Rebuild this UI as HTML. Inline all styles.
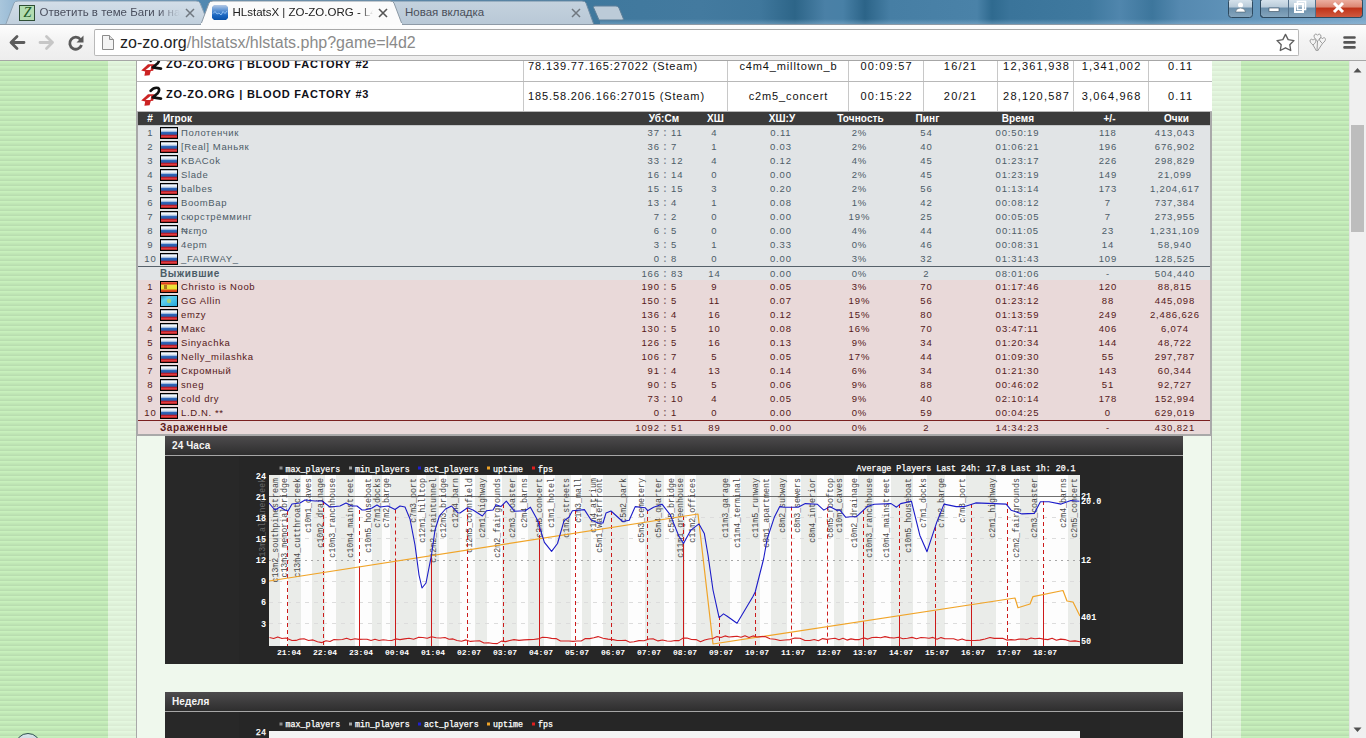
<!DOCTYPE html><html><head><meta charset="utf-8"><style>
*{margin:0;padding:0;box-sizing:border-box}
html,body{width:1366px;height:738px;overflow:hidden;background:#fff;font-family:"Liberation Sans",sans-serif}
.a{position:absolute}
.t{white-space:nowrap}
</style></head><body>
<div class="a" style="left:0px;top:60px;width:1349px;height:678px;background:repeating-linear-gradient(180deg,#b9ddb0 0,#b9ddb0 1px,#c8f1bc 1px,#c8f1bc 2px,#c5edba 2px,#c5edba 3px,#c1e8b6 3px,#c1e8b6 4px,#bde3b3 4px,#bde3b3 5px);"></div>
<div class="a" style="left:108px;top:60px;width:28px;height:678px;background:repeating-linear-gradient(180deg,#dbecd5 0,#dbecd5 1px,#e4f8df 1px,#e4f8df 2px,#e2f5dd 2px,#e2f5dd 3px,#dff2da 3px,#dff2da 4px,#ddefd7 4px,#ddefd7 5px);"></div>
<div class="a" style="left:1212px;top:60px;width:29px;height:678px;background:repeating-linear-gradient(180deg,#dbecd5 0,#dbecd5 1px,#e4f8df 1px,#e4f8df 2px,#e2f5dd 2px,#e2f5dd 3px,#dff2da 3px,#dff2da 4px,#ddefd7 4px,#ddefd7 5px);"></div>
<div class="a" style="left:136px;top:60px;width:1076px;height:678px;background:#eff8ed;border-left:1px solid #a8a8a8;border-right:1px solid #a8a8a8"></div>
<div class="a" style="left:137px;top:52px;width:1075px;height:30px;background:#fff;border-bottom:1px solid #b8b8b8"></div>
<div class="a" style="left:523px;top:52px;width:1px;height:29px;background:#c8c8c8;"></div>
<div class="a" style="left:727px;top:52px;width:1px;height:29px;background:#c8c8c8;"></div>
<div class="a" style="left:848px;top:52px;width:1px;height:29px;background:#c8c8c8;"></div>
<div class="a" style="left:923px;top:52px;width:1px;height:29px;background:#c8c8c8;"></div>
<div class="a" style="left:997px;top:52px;width:1px;height:29px;background:#c8c8c8;"></div>
<div class="a" style="left:1073px;top:52px;width:1px;height:29px;background:#c8c8c8;"></div>
<div class="a" style="left:1148px;top:52px;width:1px;height:29px;background:#c8c8c8;"></div>
<svg class="a" style="left:138px;top:54px" width="28" height="26" viewBox="0 0 28 26"><path d="M3.2 16.6 L10 10.2 L16.8 10.2 L15.2 16.8 L12.8 17 L11.6 21.2 L6.4 21.8 L7.2 17.6 Z" fill="#cc2424"/><path d="M7.6 15.9 L13.2 11.4 L12.6 15.9 Z" fill="#fff"/><path d="M12.6 6.8 Q16 3 20.2 4 Q22.4 6 19.4 9.6 L14.8 13.4 L23 14.6" stroke="#111" stroke-width="2.6" fill="none" stroke-linecap="round" stroke-linejoin="round"/></svg>
<div class="a t" style="top:59.39px;font-size:11px;line-height:11px;font-weight:bold;color:#101018;font-family:'Liberation Sans',sans-serif;letter-spacing:0.78px;left:166.00px;">ZO-ZO.ORG | BLOOD FACTORY #2</div>
<div class="a t" style="top:61.39px;font-size:11px;line-height:11px;font-weight:normal;color:#111;font-family:'Liberation Sans',sans-serif;letter-spacing:0.88px;left:528.00px;">78.139.77.165:27022 (Steam)</div>
<div class="a t" style="top:61.39px;font-size:11px;line-height:11px;font-weight:normal;color:#111;font-family:'Liberation Sans',sans-serif;letter-spacing:0.87px;left:588.43px;width:400px;text-align:center;">c4m4_milltown_b</div>
<div class="a t" style="top:61.39px;font-size:11px;line-height:11px;font-weight:normal;color:#111;font-family:'Liberation Sans',sans-serif;letter-spacing:1.2px;left:686.60px;width:400px;text-align:center;">00:09:57</div>
<div class="a t" style="top:61.39px;font-size:11px;line-height:11px;font-weight:normal;color:#111;font-family:'Liberation Sans',sans-serif;letter-spacing:1.2px;left:760.60px;width:400px;text-align:center;">16/21</div>
<div class="a t" style="top:61.39px;font-size:11px;line-height:11px;font-weight:normal;color:#111;font-family:'Liberation Sans',sans-serif;letter-spacing:1.2px;left:836.60px;width:400px;text-align:center;">12,361,938</div>
<div class="a t" style="top:61.39px;font-size:11px;line-height:11px;font-weight:normal;color:#111;font-family:'Liberation Sans',sans-serif;letter-spacing:1.2px;left:911.60px;width:400px;text-align:center;">1,341,002</div>
<div class="a t" style="top:61.39px;font-size:11px;line-height:11px;font-weight:normal;color:#111;font-family:'Liberation Sans',sans-serif;letter-spacing:1.2px;left:980.60px;width:400px;text-align:center;">0.11</div>
<div class="a" style="left:137px;top:82px;width:1075px;height:30px;background:#fff;border-bottom:1px solid #b8b8b8"></div>
<div class="a" style="left:523px;top:82px;width:1px;height:29px;background:#c8c8c8;"></div>
<div class="a" style="left:727px;top:82px;width:1px;height:29px;background:#c8c8c8;"></div>
<div class="a" style="left:848px;top:82px;width:1px;height:29px;background:#c8c8c8;"></div>
<div class="a" style="left:923px;top:82px;width:1px;height:29px;background:#c8c8c8;"></div>
<div class="a" style="left:997px;top:82px;width:1px;height:29px;background:#c8c8c8;"></div>
<div class="a" style="left:1073px;top:82px;width:1px;height:29px;background:#c8c8c8;"></div>
<div class="a" style="left:1148px;top:82px;width:1px;height:29px;background:#c8c8c8;"></div>
<svg class="a" style="left:138px;top:84px" width="28" height="26" viewBox="0 0 28 26"><path d="M3.2 16.6 L10 10.2 L16.8 10.2 L15.2 16.8 L12.8 17 L11.6 21.2 L6.4 21.8 L7.2 17.6 Z" fill="#cc2424"/><path d="M7.6 15.9 L13.2 11.4 L12.6 15.9 Z" fill="#fff"/><path d="M12.6 6.8 Q16 3 20.2 4 Q22.4 6 19.4 9.6 L14.8 13.4 L23 14.6" stroke="#111" stroke-width="2.6" fill="none" stroke-linecap="round" stroke-linejoin="round"/></svg>
<div class="a t" style="top:89.39px;font-size:11px;line-height:11px;font-weight:bold;color:#101018;font-family:'Liberation Sans',sans-serif;letter-spacing:0.78px;left:166.00px;">ZO-ZO.ORG | BLOOD FACTORY #3</div>
<div class="a t" style="top:91.39px;font-size:11px;line-height:11px;font-weight:normal;color:#111;font-family:'Liberation Sans',sans-serif;letter-spacing:0.88px;left:528.00px;">185.58.206.166:27015 (Steam)</div>
<div class="a t" style="top:91.39px;font-size:11px;line-height:11px;font-weight:normal;color:#111;font-family:'Liberation Sans',sans-serif;letter-spacing:0.87px;left:588.43px;width:400px;text-align:center;">c2m5_concert</div>
<div class="a t" style="top:91.39px;font-size:11px;line-height:11px;font-weight:normal;color:#111;font-family:'Liberation Sans',sans-serif;letter-spacing:1.2px;left:686.60px;width:400px;text-align:center;">00:15:22</div>
<div class="a t" style="top:91.39px;font-size:11px;line-height:11px;font-weight:normal;color:#111;font-family:'Liberation Sans',sans-serif;letter-spacing:1.2px;left:760.60px;width:400px;text-align:center;">20/21</div>
<div class="a t" style="top:91.39px;font-size:11px;line-height:11px;font-weight:normal;color:#111;font-family:'Liberation Sans',sans-serif;letter-spacing:1.2px;left:836.60px;width:400px;text-align:center;">28,120,587</div>
<div class="a t" style="top:91.39px;font-size:11px;line-height:11px;font-weight:normal;color:#111;font-family:'Liberation Sans',sans-serif;letter-spacing:1.2px;left:911.60px;width:400px;text-align:center;">3,064,968</div>
<div class="a t" style="top:91.39px;font-size:11px;line-height:11px;font-weight:normal;color:#111;font-family:'Liberation Sans',sans-serif;letter-spacing:1.2px;left:980.60px;width:400px;text-align:center;">0.11</div>
<div class="a" style="left:136px;top:112px;width:1076px;height:324px;background:#a9a9a9;"></div>
<div class="a" style="left:138px;top:112px;width:1072px;height:13px;background:#3b3b3b;"></div>
<div class="a" style="left:138px;top:125px;width:1072px;height:1px;background:#c4c7c9;"></div>
<div class="a t" style="top:113.53px;font-size:10px;line-height:10px;font-weight:bold;color:#fff;font-family:'Liberation Sans',sans-serif;left:-50.00px;width:400px;text-align:center;">#</div>
<div class="a t" style="top:113.53px;font-size:10px;line-height:10px;font-weight:bold;color:#fff;font-family:'Liberation Sans',sans-serif;letter-spacing:0.1px;left:163.00px;">Игрок</div>
<div class="a t" style="top:113.53px;font-size:10px;line-height:10px;font-weight:bold;color:#fff;font-family:'Liberation Sans',sans-serif;letter-spacing:0.1px;left:464.05px;width:400px;text-align:center;">Уб:См</div>
<div class="a t" style="top:113.53px;font-size:10px;line-height:10px;font-weight:bold;color:#fff;font-family:'Liberation Sans',sans-serif;letter-spacing:0.1px;left:515.55px;width:400px;text-align:center;">ХШ</div>
<div class="a t" style="top:113.53px;font-size:10px;line-height:10px;font-weight:bold;color:#fff;font-family:'Liberation Sans',sans-serif;letter-spacing:0.1px;left:582.05px;width:400px;text-align:center;">ХШ:У</div>
<div class="a t" style="top:113.53px;font-size:10px;line-height:10px;font-weight:bold;color:#fff;font-family:'Liberation Sans',sans-serif;letter-spacing:0.1px;left:660.55px;width:400px;text-align:center;">Точность</div>
<div class="a t" style="top:113.53px;font-size:10px;line-height:10px;font-weight:bold;color:#fff;font-family:'Liberation Sans',sans-serif;letter-spacing:0.1px;left:727.55px;width:400px;text-align:center;">Пинг</div>
<div class="a t" style="top:113.53px;font-size:10px;line-height:10px;font-weight:bold;color:#fff;font-family:'Liberation Sans',sans-serif;letter-spacing:0.1px;left:818.05px;width:400px;text-align:center;">Время</div>
<div class="a t" style="top:113.53px;font-size:10px;line-height:10px;font-weight:bold;color:#fff;font-family:'Liberation Sans',sans-serif;letter-spacing:0.1px;left:909.55px;width:400px;text-align:center;">+/-</div>
<div class="a t" style="top:113.53px;font-size:10px;line-height:10px;font-weight:bold;color:#fff;font-family:'Liberation Sans',sans-serif;letter-spacing:0.1px;left:976.55px;width:400px;text-align:center;">Очки</div>
<svg width="0" height="0" style="position:absolute"><defs><linearGradient id="gru" x1="0" y1="0" x2="0" y2="1"><stop offset="0" stop-color="#8a96a4"/><stop offset=".15" stop-color="#f4f6fa"/><stop offset=".32" stop-color="#c8d8ec"/><stop offset=".45" stop-color="#2f66b8"/><stop offset=".62" stop-color="#2a5aa8"/><stop offset=".74" stop-color="#b81a2a"/><stop offset=".88" stop-color="#e84848"/><stop offset="1" stop-color="#9a1010"/></linearGradient><linearGradient id="ges" x1="0" y1="0" x2="0" y2="1"><stop offset="0" stop-color="#f07050"/><stop offset=".2" stop-color="#d83010"/><stop offset=".3" stop-color="#f0e040"/><stop offset=".7" stop-color="#e8e030"/><stop offset=".8" stop-color="#e05020"/><stop offset="1" stop-color="#c83010"/></linearGradient><linearGradient id="gkz" x1="0" y1="0" x2="1" y2="1"><stop offset="0" stop-color="#3090b0"/><stop offset=".3" stop-color="#60d0f0"/><stop offset="1" stop-color="#28a8d8"/></linearGradient></defs></svg>
<div class="a" style="left:138px;top:126px;width:1072px;height:14px;background:#e1e4e6;"></div>
<div class="a t" style="top:127.96px;font-size:9.5px;line-height:9.5px;font-weight:normal;color:#4d5c66;font-family:'Liberation Sans',sans-serif;letter-spacing:0.85px;left:-49.57px;width:400px;text-align:center;">1</div>
<svg class="a" style="left:160px;top:127px" width="18" height="12"><rect x="0" y="0" width="18" height="12" fill="#000"/><rect x="1" y="1" width="16" height="10" fill="url(#gru)"/></svg>
<div class="a t" style="top:127.96px;font-size:9.5px;line-height:9.5px;font-weight:normal;color:#4d5c66;font-family:'Liberation Sans',sans-serif;letter-spacing:0.62px;left:181.00px;">Полотенчик</div>
<div class="a t" style="top:127.96px;font-size:9.5px;line-height:9.5px;font-weight:normal;color:#4d5c66;font-family:'Liberation Sans',sans-serif;letter-spacing:0.85px;left:259.85px;width:400px;text-align:right;">37</div>
<div class="a t" style="top:127.53px;font-size:10px;line-height:10px;font-weight:bold;color:#7d8a92;font-family:'Liberation Sans',sans-serif;left:465.00px;width:400px;text-align:center;">:</div>
<div class="a t" style="top:127.96px;font-size:9.5px;line-height:9.5px;font-weight:normal;color:#4d5c66;font-family:'Liberation Sans',sans-serif;letter-spacing:0.85px;left:671.00px;">11</div>
<div class="a t" style="top:127.96px;font-size:9.5px;line-height:9.5px;font-weight:normal;color:#4d5c66;font-family:'Liberation Sans',sans-serif;letter-spacing:0.85px;left:514.42px;width:400px;text-align:center;">4</div>
<div class="a t" style="top:127.96px;font-size:9.5px;line-height:9.5px;font-weight:normal;color:#4d5c66;font-family:'Liberation Sans',sans-serif;letter-spacing:0.85px;left:580.92px;width:400px;text-align:center;">0.11</div>
<div class="a t" style="top:127.96px;font-size:9.5px;line-height:9.5px;font-weight:normal;color:#4d5c66;font-family:'Liberation Sans',sans-serif;letter-spacing:0.85px;left:659.42px;width:400px;text-align:center;">2%</div>
<div class="a t" style="top:127.96px;font-size:9.5px;line-height:9.5px;font-weight:normal;color:#4d5c66;font-family:'Liberation Sans',sans-serif;letter-spacing:0.85px;left:726.42px;width:400px;text-align:center;">54</div>
<div class="a t" style="top:127.96px;font-size:9.5px;line-height:9.5px;font-weight:normal;color:#4d5c66;font-family:'Liberation Sans',sans-serif;letter-spacing:0.85px;left:817.42px;width:400px;text-align:center;">00:50:19</div>
<div class="a t" style="top:127.96px;font-size:9.5px;line-height:9.5px;font-weight:normal;color:#4d5c66;font-family:'Liberation Sans',sans-serif;letter-spacing:0.85px;left:907.92px;width:400px;text-align:center;">118</div>
<div class="a t" style="top:127.96px;font-size:9.5px;line-height:9.5px;font-weight:normal;color:#4d5c66;font-family:'Liberation Sans',sans-serif;letter-spacing:0.85px;left:974.92px;width:400px;text-align:center;">413,043</div>
<div class="a" style="left:138px;top:140px;width:1072px;height:14px;background:#e1e4e6;"></div>
<div class="a t" style="top:141.96px;font-size:9.5px;line-height:9.5px;font-weight:normal;color:#4d5c66;font-family:'Liberation Sans',sans-serif;letter-spacing:0.85px;left:-49.57px;width:400px;text-align:center;">2</div>
<svg class="a" style="left:160px;top:141px" width="18" height="12"><rect x="0" y="0" width="18" height="12" fill="#000"/><rect x="1" y="1" width="16" height="10" fill="url(#gru)"/></svg>
<div class="a t" style="top:141.96px;font-size:9.5px;line-height:9.5px;font-weight:normal;color:#4d5c66;font-family:'Liberation Sans',sans-serif;letter-spacing:0.62px;left:181.00px;">[Real] Маньяк</div>
<div class="a t" style="top:141.96px;font-size:9.5px;line-height:9.5px;font-weight:normal;color:#4d5c66;font-family:'Liberation Sans',sans-serif;letter-spacing:0.85px;left:259.85px;width:400px;text-align:right;">36</div>
<div class="a t" style="top:141.53px;font-size:10px;line-height:10px;font-weight:bold;color:#7d8a92;font-family:'Liberation Sans',sans-serif;left:465.00px;width:400px;text-align:center;">:</div>
<div class="a t" style="top:141.96px;font-size:9.5px;line-height:9.5px;font-weight:normal;color:#4d5c66;font-family:'Liberation Sans',sans-serif;letter-spacing:0.85px;left:671.00px;">7</div>
<div class="a t" style="top:141.96px;font-size:9.5px;line-height:9.5px;font-weight:normal;color:#4d5c66;font-family:'Liberation Sans',sans-serif;letter-spacing:0.85px;left:514.42px;width:400px;text-align:center;">1</div>
<div class="a t" style="top:141.96px;font-size:9.5px;line-height:9.5px;font-weight:normal;color:#4d5c66;font-family:'Liberation Sans',sans-serif;letter-spacing:0.85px;left:580.92px;width:400px;text-align:center;">0.03</div>
<div class="a t" style="top:141.96px;font-size:9.5px;line-height:9.5px;font-weight:normal;color:#4d5c66;font-family:'Liberation Sans',sans-serif;letter-spacing:0.85px;left:659.42px;width:400px;text-align:center;">2%</div>
<div class="a t" style="top:141.96px;font-size:9.5px;line-height:9.5px;font-weight:normal;color:#4d5c66;font-family:'Liberation Sans',sans-serif;letter-spacing:0.85px;left:726.42px;width:400px;text-align:center;">40</div>
<div class="a t" style="top:141.96px;font-size:9.5px;line-height:9.5px;font-weight:normal;color:#4d5c66;font-family:'Liberation Sans',sans-serif;letter-spacing:0.85px;left:817.42px;width:400px;text-align:center;">01:06:21</div>
<div class="a t" style="top:141.96px;font-size:9.5px;line-height:9.5px;font-weight:normal;color:#4d5c66;font-family:'Liberation Sans',sans-serif;letter-spacing:0.85px;left:907.92px;width:400px;text-align:center;">196</div>
<div class="a t" style="top:141.96px;font-size:9.5px;line-height:9.5px;font-weight:normal;color:#4d5c66;font-family:'Liberation Sans',sans-serif;letter-spacing:0.85px;left:974.92px;width:400px;text-align:center;">676,902</div>
<div class="a" style="left:138px;top:154px;width:1072px;height:14px;background:#e1e4e6;"></div>
<div class="a t" style="top:155.96px;font-size:9.5px;line-height:9.5px;font-weight:normal;color:#4d5c66;font-family:'Liberation Sans',sans-serif;letter-spacing:0.85px;left:-49.57px;width:400px;text-align:center;">3</div>
<svg class="a" style="left:160px;top:155px" width="18" height="12"><rect x="0" y="0" width="18" height="12" fill="#000"/><rect x="1" y="1" width="16" height="10" fill="url(#gru)"/></svg>
<div class="a t" style="top:155.96px;font-size:9.5px;line-height:9.5px;font-weight:normal;color:#4d5c66;font-family:'Liberation Sans',sans-serif;letter-spacing:0.62px;left:181.00px;">KBACok</div>
<div class="a t" style="top:155.96px;font-size:9.5px;line-height:9.5px;font-weight:normal;color:#4d5c66;font-family:'Liberation Sans',sans-serif;letter-spacing:0.85px;left:259.85px;width:400px;text-align:right;">33</div>
<div class="a t" style="top:155.53px;font-size:10px;line-height:10px;font-weight:bold;color:#7d8a92;font-family:'Liberation Sans',sans-serif;left:465.00px;width:400px;text-align:center;">:</div>
<div class="a t" style="top:155.96px;font-size:9.5px;line-height:9.5px;font-weight:normal;color:#4d5c66;font-family:'Liberation Sans',sans-serif;letter-spacing:0.85px;left:671.00px;">12</div>
<div class="a t" style="top:155.96px;font-size:9.5px;line-height:9.5px;font-weight:normal;color:#4d5c66;font-family:'Liberation Sans',sans-serif;letter-spacing:0.85px;left:514.42px;width:400px;text-align:center;">4</div>
<div class="a t" style="top:155.96px;font-size:9.5px;line-height:9.5px;font-weight:normal;color:#4d5c66;font-family:'Liberation Sans',sans-serif;letter-spacing:0.85px;left:580.92px;width:400px;text-align:center;">0.12</div>
<div class="a t" style="top:155.96px;font-size:9.5px;line-height:9.5px;font-weight:normal;color:#4d5c66;font-family:'Liberation Sans',sans-serif;letter-spacing:0.85px;left:659.42px;width:400px;text-align:center;">4%</div>
<div class="a t" style="top:155.96px;font-size:9.5px;line-height:9.5px;font-weight:normal;color:#4d5c66;font-family:'Liberation Sans',sans-serif;letter-spacing:0.85px;left:726.42px;width:400px;text-align:center;">45</div>
<div class="a t" style="top:155.96px;font-size:9.5px;line-height:9.5px;font-weight:normal;color:#4d5c66;font-family:'Liberation Sans',sans-serif;letter-spacing:0.85px;left:817.42px;width:400px;text-align:center;">01:23:17</div>
<div class="a t" style="top:155.96px;font-size:9.5px;line-height:9.5px;font-weight:normal;color:#4d5c66;font-family:'Liberation Sans',sans-serif;letter-spacing:0.85px;left:907.92px;width:400px;text-align:center;">226</div>
<div class="a t" style="top:155.96px;font-size:9.5px;line-height:9.5px;font-weight:normal;color:#4d5c66;font-family:'Liberation Sans',sans-serif;letter-spacing:0.85px;left:974.92px;width:400px;text-align:center;">298,829</div>
<div class="a" style="left:138px;top:168px;width:1072px;height:14px;background:#e1e4e6;"></div>
<div class="a t" style="top:169.96px;font-size:9.5px;line-height:9.5px;font-weight:normal;color:#4d5c66;font-family:'Liberation Sans',sans-serif;letter-spacing:0.85px;left:-49.57px;width:400px;text-align:center;">4</div>
<svg class="a" style="left:160px;top:169px" width="18" height="12"><rect x="0" y="0" width="18" height="12" fill="#000"/><rect x="1" y="1" width="16" height="10" fill="url(#gru)"/></svg>
<div class="a t" style="top:169.96px;font-size:9.5px;line-height:9.5px;font-weight:normal;color:#4d5c66;font-family:'Liberation Sans',sans-serif;letter-spacing:0.62px;left:181.00px;">Slade</div>
<div class="a t" style="top:169.96px;font-size:9.5px;line-height:9.5px;font-weight:normal;color:#4d5c66;font-family:'Liberation Sans',sans-serif;letter-spacing:0.85px;left:259.85px;width:400px;text-align:right;">16</div>
<div class="a t" style="top:169.53px;font-size:10px;line-height:10px;font-weight:bold;color:#7d8a92;font-family:'Liberation Sans',sans-serif;left:465.00px;width:400px;text-align:center;">:</div>
<div class="a t" style="top:169.96px;font-size:9.5px;line-height:9.5px;font-weight:normal;color:#4d5c66;font-family:'Liberation Sans',sans-serif;letter-spacing:0.85px;left:671.00px;">14</div>
<div class="a t" style="top:169.96px;font-size:9.5px;line-height:9.5px;font-weight:normal;color:#4d5c66;font-family:'Liberation Sans',sans-serif;letter-spacing:0.85px;left:514.42px;width:400px;text-align:center;">0</div>
<div class="a t" style="top:169.96px;font-size:9.5px;line-height:9.5px;font-weight:normal;color:#4d5c66;font-family:'Liberation Sans',sans-serif;letter-spacing:0.85px;left:580.92px;width:400px;text-align:center;">0.00</div>
<div class="a t" style="top:169.96px;font-size:9.5px;line-height:9.5px;font-weight:normal;color:#4d5c66;font-family:'Liberation Sans',sans-serif;letter-spacing:0.85px;left:659.42px;width:400px;text-align:center;">2%</div>
<div class="a t" style="top:169.96px;font-size:9.5px;line-height:9.5px;font-weight:normal;color:#4d5c66;font-family:'Liberation Sans',sans-serif;letter-spacing:0.85px;left:726.42px;width:400px;text-align:center;">45</div>
<div class="a t" style="top:169.96px;font-size:9.5px;line-height:9.5px;font-weight:normal;color:#4d5c66;font-family:'Liberation Sans',sans-serif;letter-spacing:0.85px;left:817.42px;width:400px;text-align:center;">01:23:19</div>
<div class="a t" style="top:169.96px;font-size:9.5px;line-height:9.5px;font-weight:normal;color:#4d5c66;font-family:'Liberation Sans',sans-serif;letter-spacing:0.85px;left:907.92px;width:400px;text-align:center;">149</div>
<div class="a t" style="top:169.96px;font-size:9.5px;line-height:9.5px;font-weight:normal;color:#4d5c66;font-family:'Liberation Sans',sans-serif;letter-spacing:0.85px;left:974.92px;width:400px;text-align:center;">21,099</div>
<div class="a" style="left:138px;top:182px;width:1072px;height:14px;background:#e1e4e6;"></div>
<div class="a t" style="top:183.96px;font-size:9.5px;line-height:9.5px;font-weight:normal;color:#4d5c66;font-family:'Liberation Sans',sans-serif;letter-spacing:0.85px;left:-49.57px;width:400px;text-align:center;">5</div>
<svg class="a" style="left:160px;top:183px" width="18" height="12"><rect x="0" y="0" width="18" height="12" fill="#000"/><rect x="1" y="1" width="16" height="10" fill="url(#gru)"/></svg>
<div class="a t" style="top:183.96px;font-size:9.5px;line-height:9.5px;font-weight:normal;color:#4d5c66;font-family:'Liberation Sans',sans-serif;letter-spacing:0.62px;left:181.00px;">balbes</div>
<div class="a t" style="top:183.96px;font-size:9.5px;line-height:9.5px;font-weight:normal;color:#4d5c66;font-family:'Liberation Sans',sans-serif;letter-spacing:0.85px;left:259.85px;width:400px;text-align:right;">15</div>
<div class="a t" style="top:183.53px;font-size:10px;line-height:10px;font-weight:bold;color:#7d8a92;font-family:'Liberation Sans',sans-serif;left:465.00px;width:400px;text-align:center;">:</div>
<div class="a t" style="top:183.96px;font-size:9.5px;line-height:9.5px;font-weight:normal;color:#4d5c66;font-family:'Liberation Sans',sans-serif;letter-spacing:0.85px;left:671.00px;">15</div>
<div class="a t" style="top:183.96px;font-size:9.5px;line-height:9.5px;font-weight:normal;color:#4d5c66;font-family:'Liberation Sans',sans-serif;letter-spacing:0.85px;left:514.42px;width:400px;text-align:center;">3</div>
<div class="a t" style="top:183.96px;font-size:9.5px;line-height:9.5px;font-weight:normal;color:#4d5c66;font-family:'Liberation Sans',sans-serif;letter-spacing:0.85px;left:580.92px;width:400px;text-align:center;">0.20</div>
<div class="a t" style="top:183.96px;font-size:9.5px;line-height:9.5px;font-weight:normal;color:#4d5c66;font-family:'Liberation Sans',sans-serif;letter-spacing:0.85px;left:659.42px;width:400px;text-align:center;">2%</div>
<div class="a t" style="top:183.96px;font-size:9.5px;line-height:9.5px;font-weight:normal;color:#4d5c66;font-family:'Liberation Sans',sans-serif;letter-spacing:0.85px;left:726.42px;width:400px;text-align:center;">56</div>
<div class="a t" style="top:183.96px;font-size:9.5px;line-height:9.5px;font-weight:normal;color:#4d5c66;font-family:'Liberation Sans',sans-serif;letter-spacing:0.85px;left:817.42px;width:400px;text-align:center;">01:13:14</div>
<div class="a t" style="top:183.96px;font-size:9.5px;line-height:9.5px;font-weight:normal;color:#4d5c66;font-family:'Liberation Sans',sans-serif;letter-spacing:0.85px;left:907.92px;width:400px;text-align:center;">173</div>
<div class="a t" style="top:183.96px;font-size:9.5px;line-height:9.5px;font-weight:normal;color:#4d5c66;font-family:'Liberation Sans',sans-serif;letter-spacing:0.85px;left:974.92px;width:400px;text-align:center;">1,204,617</div>
<div class="a" style="left:138px;top:196px;width:1072px;height:14px;background:#e1e4e6;"></div>
<div class="a t" style="top:197.96px;font-size:9.5px;line-height:9.5px;font-weight:normal;color:#4d5c66;font-family:'Liberation Sans',sans-serif;letter-spacing:0.85px;left:-49.57px;width:400px;text-align:center;">6</div>
<svg class="a" style="left:160px;top:197px" width="18" height="12"><rect x="0" y="0" width="18" height="12" fill="#000"/><rect x="1" y="1" width="16" height="10" fill="url(#gru)"/></svg>
<div class="a t" style="top:197.96px;font-size:9.5px;line-height:9.5px;font-weight:normal;color:#4d5c66;font-family:'Liberation Sans',sans-serif;letter-spacing:0.62px;left:181.00px;">BoomBap</div>
<div class="a t" style="top:197.96px;font-size:9.5px;line-height:9.5px;font-weight:normal;color:#4d5c66;font-family:'Liberation Sans',sans-serif;letter-spacing:0.85px;left:259.85px;width:400px;text-align:right;">13</div>
<div class="a t" style="top:197.53px;font-size:10px;line-height:10px;font-weight:bold;color:#7d8a92;font-family:'Liberation Sans',sans-serif;left:465.00px;width:400px;text-align:center;">:</div>
<div class="a t" style="top:197.96px;font-size:9.5px;line-height:9.5px;font-weight:normal;color:#4d5c66;font-family:'Liberation Sans',sans-serif;letter-spacing:0.85px;left:671.00px;">4</div>
<div class="a t" style="top:197.96px;font-size:9.5px;line-height:9.5px;font-weight:normal;color:#4d5c66;font-family:'Liberation Sans',sans-serif;letter-spacing:0.85px;left:514.42px;width:400px;text-align:center;">1</div>
<div class="a t" style="top:197.96px;font-size:9.5px;line-height:9.5px;font-weight:normal;color:#4d5c66;font-family:'Liberation Sans',sans-serif;letter-spacing:0.85px;left:580.92px;width:400px;text-align:center;">0.08</div>
<div class="a t" style="top:197.96px;font-size:9.5px;line-height:9.5px;font-weight:normal;color:#4d5c66;font-family:'Liberation Sans',sans-serif;letter-spacing:0.85px;left:659.42px;width:400px;text-align:center;">1%</div>
<div class="a t" style="top:197.96px;font-size:9.5px;line-height:9.5px;font-weight:normal;color:#4d5c66;font-family:'Liberation Sans',sans-serif;letter-spacing:0.85px;left:726.42px;width:400px;text-align:center;">42</div>
<div class="a t" style="top:197.96px;font-size:9.5px;line-height:9.5px;font-weight:normal;color:#4d5c66;font-family:'Liberation Sans',sans-serif;letter-spacing:0.85px;left:817.42px;width:400px;text-align:center;">00:08:12</div>
<div class="a t" style="top:197.96px;font-size:9.5px;line-height:9.5px;font-weight:normal;color:#4d5c66;font-family:'Liberation Sans',sans-serif;letter-spacing:0.85px;left:907.92px;width:400px;text-align:center;">7</div>
<div class="a t" style="top:197.96px;font-size:9.5px;line-height:9.5px;font-weight:normal;color:#4d5c66;font-family:'Liberation Sans',sans-serif;letter-spacing:0.85px;left:974.92px;width:400px;text-align:center;">737,384</div>
<div class="a" style="left:138px;top:210px;width:1072px;height:14px;background:#e1e4e6;"></div>
<div class="a t" style="top:211.96px;font-size:9.5px;line-height:9.5px;font-weight:normal;color:#4d5c66;font-family:'Liberation Sans',sans-serif;letter-spacing:0.85px;left:-49.57px;width:400px;text-align:center;">7</div>
<svg class="a" style="left:160px;top:211px" width="18" height="12"><rect x="0" y="0" width="18" height="12" fill="#000"/><rect x="1" y="1" width="16" height="10" fill="url(#gru)"/></svg>
<div class="a t" style="top:211.96px;font-size:9.5px;line-height:9.5px;font-weight:normal;color:#4d5c66;font-family:'Liberation Sans',sans-serif;letter-spacing:0.62px;left:181.00px;">сюрстрёмминг</div>
<div class="a t" style="top:211.96px;font-size:9.5px;line-height:9.5px;font-weight:normal;color:#4d5c66;font-family:'Liberation Sans',sans-serif;letter-spacing:0.85px;left:259.85px;width:400px;text-align:right;">7</div>
<div class="a t" style="top:211.53px;font-size:10px;line-height:10px;font-weight:bold;color:#7d8a92;font-family:'Liberation Sans',sans-serif;left:465.00px;width:400px;text-align:center;">:</div>
<div class="a t" style="top:211.96px;font-size:9.5px;line-height:9.5px;font-weight:normal;color:#4d5c66;font-family:'Liberation Sans',sans-serif;letter-spacing:0.85px;left:671.00px;">2</div>
<div class="a t" style="top:211.96px;font-size:9.5px;line-height:9.5px;font-weight:normal;color:#4d5c66;font-family:'Liberation Sans',sans-serif;letter-spacing:0.85px;left:514.42px;width:400px;text-align:center;">0</div>
<div class="a t" style="top:211.96px;font-size:9.5px;line-height:9.5px;font-weight:normal;color:#4d5c66;font-family:'Liberation Sans',sans-serif;letter-spacing:0.85px;left:580.92px;width:400px;text-align:center;">0.00</div>
<div class="a t" style="top:211.96px;font-size:9.5px;line-height:9.5px;font-weight:normal;color:#4d5c66;font-family:'Liberation Sans',sans-serif;letter-spacing:0.85px;left:659.42px;width:400px;text-align:center;">19%</div>
<div class="a t" style="top:211.96px;font-size:9.5px;line-height:9.5px;font-weight:normal;color:#4d5c66;font-family:'Liberation Sans',sans-serif;letter-spacing:0.85px;left:726.42px;width:400px;text-align:center;">25</div>
<div class="a t" style="top:211.96px;font-size:9.5px;line-height:9.5px;font-weight:normal;color:#4d5c66;font-family:'Liberation Sans',sans-serif;letter-spacing:0.85px;left:817.42px;width:400px;text-align:center;">00:05:05</div>
<div class="a t" style="top:211.96px;font-size:9.5px;line-height:9.5px;font-weight:normal;color:#4d5c66;font-family:'Liberation Sans',sans-serif;letter-spacing:0.85px;left:907.92px;width:400px;text-align:center;">7</div>
<div class="a t" style="top:211.96px;font-size:9.5px;line-height:9.5px;font-weight:normal;color:#4d5c66;font-family:'Liberation Sans',sans-serif;letter-spacing:0.85px;left:974.92px;width:400px;text-align:center;">273,955</div>
<div class="a" style="left:138px;top:224px;width:1072px;height:14px;background:#e1e4e6;"></div>
<div class="a t" style="top:225.96px;font-size:9.5px;line-height:9.5px;font-weight:normal;color:#4d5c66;font-family:'Liberation Sans',sans-serif;letter-spacing:0.85px;left:-49.57px;width:400px;text-align:center;">8</div>
<svg class="a" style="left:160px;top:225px" width="18" height="12"><rect x="0" y="0" width="18" height="12" fill="#000"/><rect x="1" y="1" width="16" height="10" fill="url(#gru)"/></svg>
<div class="a t" style="top:225.96px;font-size:9.5px;line-height:9.5px;font-weight:normal;color:#4d5c66;font-family:'Liberation Sans',sans-serif;letter-spacing:0.62px;left:181.00px;">₦εɱo</div>
<div class="a t" style="top:225.96px;font-size:9.5px;line-height:9.5px;font-weight:normal;color:#4d5c66;font-family:'Liberation Sans',sans-serif;letter-spacing:0.85px;left:259.85px;width:400px;text-align:right;">6</div>
<div class="a t" style="top:225.53px;font-size:10px;line-height:10px;font-weight:bold;color:#7d8a92;font-family:'Liberation Sans',sans-serif;left:465.00px;width:400px;text-align:center;">:</div>
<div class="a t" style="top:225.96px;font-size:9.5px;line-height:9.5px;font-weight:normal;color:#4d5c66;font-family:'Liberation Sans',sans-serif;letter-spacing:0.85px;left:671.00px;">5</div>
<div class="a t" style="top:225.96px;font-size:9.5px;line-height:9.5px;font-weight:normal;color:#4d5c66;font-family:'Liberation Sans',sans-serif;letter-spacing:0.85px;left:514.42px;width:400px;text-align:center;">0</div>
<div class="a t" style="top:225.96px;font-size:9.5px;line-height:9.5px;font-weight:normal;color:#4d5c66;font-family:'Liberation Sans',sans-serif;letter-spacing:0.85px;left:580.92px;width:400px;text-align:center;">0.00</div>
<div class="a t" style="top:225.96px;font-size:9.5px;line-height:9.5px;font-weight:normal;color:#4d5c66;font-family:'Liberation Sans',sans-serif;letter-spacing:0.85px;left:659.42px;width:400px;text-align:center;">4%</div>
<div class="a t" style="top:225.96px;font-size:9.5px;line-height:9.5px;font-weight:normal;color:#4d5c66;font-family:'Liberation Sans',sans-serif;letter-spacing:0.85px;left:726.42px;width:400px;text-align:center;">44</div>
<div class="a t" style="top:225.96px;font-size:9.5px;line-height:9.5px;font-weight:normal;color:#4d5c66;font-family:'Liberation Sans',sans-serif;letter-spacing:0.85px;left:817.42px;width:400px;text-align:center;">00:11:05</div>
<div class="a t" style="top:225.96px;font-size:9.5px;line-height:9.5px;font-weight:normal;color:#4d5c66;font-family:'Liberation Sans',sans-serif;letter-spacing:0.85px;left:907.92px;width:400px;text-align:center;">23</div>
<div class="a t" style="top:225.96px;font-size:9.5px;line-height:9.5px;font-weight:normal;color:#4d5c66;font-family:'Liberation Sans',sans-serif;letter-spacing:0.85px;left:974.92px;width:400px;text-align:center;">1,231,109</div>
<div class="a" style="left:138px;top:238px;width:1072px;height:14px;background:#e1e4e6;"></div>
<div class="a t" style="top:239.96px;font-size:9.5px;line-height:9.5px;font-weight:normal;color:#4d5c66;font-family:'Liberation Sans',sans-serif;letter-spacing:0.85px;left:-49.57px;width:400px;text-align:center;">9</div>
<svg class="a" style="left:160px;top:239px" width="18" height="12"><rect x="0" y="0" width="18" height="12" fill="#000"/><rect x="1" y="1" width="16" height="10" fill="url(#gru)"/></svg>
<div class="a t" style="top:239.96px;font-size:9.5px;line-height:9.5px;font-weight:normal;color:#4d5c66;font-family:'Liberation Sans',sans-serif;letter-spacing:0.62px;left:181.00px;">4epm</div>
<div class="a t" style="top:239.96px;font-size:9.5px;line-height:9.5px;font-weight:normal;color:#4d5c66;font-family:'Liberation Sans',sans-serif;letter-spacing:0.85px;left:259.85px;width:400px;text-align:right;">3</div>
<div class="a t" style="top:239.53px;font-size:10px;line-height:10px;font-weight:bold;color:#7d8a92;font-family:'Liberation Sans',sans-serif;left:465.00px;width:400px;text-align:center;">:</div>
<div class="a t" style="top:239.96px;font-size:9.5px;line-height:9.5px;font-weight:normal;color:#4d5c66;font-family:'Liberation Sans',sans-serif;letter-spacing:0.85px;left:671.00px;">5</div>
<div class="a t" style="top:239.96px;font-size:9.5px;line-height:9.5px;font-weight:normal;color:#4d5c66;font-family:'Liberation Sans',sans-serif;letter-spacing:0.85px;left:514.42px;width:400px;text-align:center;">1</div>
<div class="a t" style="top:239.96px;font-size:9.5px;line-height:9.5px;font-weight:normal;color:#4d5c66;font-family:'Liberation Sans',sans-serif;letter-spacing:0.85px;left:580.92px;width:400px;text-align:center;">0.33</div>
<div class="a t" style="top:239.96px;font-size:9.5px;line-height:9.5px;font-weight:normal;color:#4d5c66;font-family:'Liberation Sans',sans-serif;letter-spacing:0.85px;left:659.42px;width:400px;text-align:center;">0%</div>
<div class="a t" style="top:239.96px;font-size:9.5px;line-height:9.5px;font-weight:normal;color:#4d5c66;font-family:'Liberation Sans',sans-serif;letter-spacing:0.85px;left:726.42px;width:400px;text-align:center;">46</div>
<div class="a t" style="top:239.96px;font-size:9.5px;line-height:9.5px;font-weight:normal;color:#4d5c66;font-family:'Liberation Sans',sans-serif;letter-spacing:0.85px;left:817.42px;width:400px;text-align:center;">00:08:31</div>
<div class="a t" style="top:239.96px;font-size:9.5px;line-height:9.5px;font-weight:normal;color:#4d5c66;font-family:'Liberation Sans',sans-serif;letter-spacing:0.85px;left:907.92px;width:400px;text-align:center;">14</div>
<div class="a t" style="top:239.96px;font-size:9.5px;line-height:9.5px;font-weight:normal;color:#4d5c66;font-family:'Liberation Sans',sans-serif;letter-spacing:0.85px;left:974.92px;width:400px;text-align:center;">58,940</div>
<div class="a" style="left:138px;top:252px;width:1072px;height:14px;background:#e1e4e6;"></div>
<div class="a t" style="top:253.96px;font-size:9.5px;line-height:9.5px;font-weight:normal;color:#4d5c66;font-family:'Liberation Sans',sans-serif;letter-spacing:0.85px;left:-49.57px;width:400px;text-align:center;">10</div>
<svg class="a" style="left:160px;top:253px" width="18" height="12"><rect x="0" y="0" width="18" height="12" fill="#000"/><rect x="1" y="1" width="16" height="10" fill="url(#gru)"/></svg>
<div class="a t" style="top:253.96px;font-size:9.5px;line-height:9.5px;font-weight:normal;color:#4d5c66;font-family:'Liberation Sans',sans-serif;letter-spacing:0.62px;left:181.00px;">_FAIRWAY_</div>
<div class="a t" style="top:253.96px;font-size:9.5px;line-height:9.5px;font-weight:normal;color:#4d5c66;font-family:'Liberation Sans',sans-serif;letter-spacing:0.85px;left:259.85px;width:400px;text-align:right;">0</div>
<div class="a t" style="top:253.53px;font-size:10px;line-height:10px;font-weight:bold;color:#7d8a92;font-family:'Liberation Sans',sans-serif;left:465.00px;width:400px;text-align:center;">:</div>
<div class="a t" style="top:253.96px;font-size:9.5px;line-height:9.5px;font-weight:normal;color:#4d5c66;font-family:'Liberation Sans',sans-serif;letter-spacing:0.85px;left:671.00px;">8</div>
<div class="a t" style="top:253.96px;font-size:9.5px;line-height:9.5px;font-weight:normal;color:#4d5c66;font-family:'Liberation Sans',sans-serif;letter-spacing:0.85px;left:514.42px;width:400px;text-align:center;">0</div>
<div class="a t" style="top:253.96px;font-size:9.5px;line-height:9.5px;font-weight:normal;color:#4d5c66;font-family:'Liberation Sans',sans-serif;letter-spacing:0.85px;left:580.92px;width:400px;text-align:center;">0.00</div>
<div class="a t" style="top:253.96px;font-size:9.5px;line-height:9.5px;font-weight:normal;color:#4d5c66;font-family:'Liberation Sans',sans-serif;letter-spacing:0.85px;left:659.42px;width:400px;text-align:center;">3%</div>
<div class="a t" style="top:253.96px;font-size:9.5px;line-height:9.5px;font-weight:normal;color:#4d5c66;font-family:'Liberation Sans',sans-serif;letter-spacing:0.85px;left:726.42px;width:400px;text-align:center;">32</div>
<div class="a t" style="top:253.96px;font-size:9.5px;line-height:9.5px;font-weight:normal;color:#4d5c66;font-family:'Liberation Sans',sans-serif;letter-spacing:0.85px;left:817.42px;width:400px;text-align:center;">01:31:43</div>
<div class="a t" style="top:253.96px;font-size:9.5px;line-height:9.5px;font-weight:normal;color:#4d5c66;font-family:'Liberation Sans',sans-serif;letter-spacing:0.85px;left:907.92px;width:400px;text-align:center;">109</div>
<div class="a t" style="top:253.96px;font-size:9.5px;line-height:9.5px;font-weight:normal;color:#4d5c66;font-family:'Liberation Sans',sans-serif;letter-spacing:0.85px;left:974.92px;width:400px;text-align:center;">128,525</div>
<div class="a" style="left:138px;top:266px;width:1072px;height:1px;background:#56616a;"></div>
<div class="a" style="left:138px;top:267px;width:1072px;height:14px;background:#e1e4e6;"></div>
<div class="a t" style="top:268.96px;font-size:9.5px;line-height:9.5px;font-weight:normal;color:#4d5c66;font-family:'Liberation Sans',sans-serif;letter-spacing:0.62px;left:181.00px;"></div>
<div class="a t" style="top:268.96px;font-size:9.5px;line-height:9.5px;font-weight:normal;color:#4d5c66;font-family:'Liberation Sans',sans-serif;letter-spacing:0.85px;left:259.85px;width:400px;text-align:right;">166</div>
<div class="a t" style="top:268.54px;font-size:10px;line-height:10px;font-weight:bold;color:#7d8a92;font-family:'Liberation Sans',sans-serif;left:465.00px;width:400px;text-align:center;">:</div>
<div class="a t" style="top:268.96px;font-size:9.5px;line-height:9.5px;font-weight:normal;color:#4d5c66;font-family:'Liberation Sans',sans-serif;letter-spacing:0.85px;left:671.00px;">83</div>
<div class="a t" style="top:268.96px;font-size:9.5px;line-height:9.5px;font-weight:normal;color:#4d5c66;font-family:'Liberation Sans',sans-serif;letter-spacing:0.85px;left:514.42px;width:400px;text-align:center;">14</div>
<div class="a t" style="top:268.96px;font-size:9.5px;line-height:9.5px;font-weight:normal;color:#4d5c66;font-family:'Liberation Sans',sans-serif;letter-spacing:0.85px;left:580.92px;width:400px;text-align:center;">0.00</div>
<div class="a t" style="top:268.96px;font-size:9.5px;line-height:9.5px;font-weight:normal;color:#4d5c66;font-family:'Liberation Sans',sans-serif;letter-spacing:0.85px;left:659.42px;width:400px;text-align:center;">0%</div>
<div class="a t" style="top:268.96px;font-size:9.5px;line-height:9.5px;font-weight:normal;color:#4d5c66;font-family:'Liberation Sans',sans-serif;letter-spacing:0.85px;left:726.42px;width:400px;text-align:center;">2</div>
<div class="a t" style="top:268.96px;font-size:9.5px;line-height:9.5px;font-weight:normal;color:#4d5c66;font-family:'Liberation Sans',sans-serif;letter-spacing:0.85px;left:817.42px;width:400px;text-align:center;">08:01:06</div>
<div class="a t" style="top:268.96px;font-size:9.5px;line-height:9.5px;font-weight:normal;color:#4d5c66;font-family:'Liberation Sans',sans-serif;letter-spacing:0.85px;left:907.92px;width:400px;text-align:center;">-</div>
<div class="a t" style="top:268.96px;font-size:9.5px;line-height:9.5px;font-weight:normal;color:#4d5c66;font-family:'Liberation Sans',sans-serif;letter-spacing:0.85px;left:974.92px;width:400px;text-align:center;">504,440</div>
<div class="a t" style="top:268.54px;font-size:10px;line-height:10px;font-weight:bold;color:#4b5c66;font-family:'Liberation Sans',sans-serif;letter-spacing:0.6px;left:160.00px;">Выжившие</div>
<div class="a" style="left:138px;top:280px;width:1072px;height:0px;background:#e1e4e6;"></div>
<div class="a" style="left:138px;top:280px;width:1072px;height:14px;background:#e9d9d9;"></div>
<div class="a t" style="top:281.96px;font-size:9.5px;line-height:9.5px;font-weight:normal;color:#551818;font-family:'Liberation Sans',sans-serif;letter-spacing:0.85px;left:-49.57px;width:400px;text-align:center;">1</div>
<svg class="a" style="left:160px;top:281px" width="18" height="12"><rect x="0" y="0" width="18" height="12" fill="#000"/><rect x="1" y="1" width="16" height="10" fill="url(#ges)"/><rect x="4" y="4" width="3" height="4" fill="#a05a20" opacity=".8"/></svg>
<div class="a t" style="top:281.96px;font-size:9.5px;line-height:9.5px;font-weight:normal;color:#551818;font-family:'Liberation Sans',sans-serif;letter-spacing:0.62px;left:181.00px;">Christo is Noob</div>
<div class="a t" style="top:281.96px;font-size:9.5px;line-height:9.5px;font-weight:normal;color:#551818;font-family:'Liberation Sans',sans-serif;letter-spacing:0.85px;left:259.85px;width:400px;text-align:right;">190</div>
<div class="a t" style="top:281.54px;font-size:10px;line-height:10px;font-weight:bold;color:#8a6a6a;font-family:'Liberation Sans',sans-serif;left:465.00px;width:400px;text-align:center;">:</div>
<div class="a t" style="top:281.96px;font-size:9.5px;line-height:9.5px;font-weight:normal;color:#551818;font-family:'Liberation Sans',sans-serif;letter-spacing:0.85px;left:671.00px;">5</div>
<div class="a t" style="top:281.96px;font-size:9.5px;line-height:9.5px;font-weight:normal;color:#551818;font-family:'Liberation Sans',sans-serif;letter-spacing:0.85px;left:514.42px;width:400px;text-align:center;">9</div>
<div class="a t" style="top:281.96px;font-size:9.5px;line-height:9.5px;font-weight:normal;color:#551818;font-family:'Liberation Sans',sans-serif;letter-spacing:0.85px;left:580.92px;width:400px;text-align:center;">0.05</div>
<div class="a t" style="top:281.96px;font-size:9.5px;line-height:9.5px;font-weight:normal;color:#551818;font-family:'Liberation Sans',sans-serif;letter-spacing:0.85px;left:659.42px;width:400px;text-align:center;">3%</div>
<div class="a t" style="top:281.96px;font-size:9.5px;line-height:9.5px;font-weight:normal;color:#551818;font-family:'Liberation Sans',sans-serif;letter-spacing:0.85px;left:726.42px;width:400px;text-align:center;">70</div>
<div class="a t" style="top:281.96px;font-size:9.5px;line-height:9.5px;font-weight:normal;color:#551818;font-family:'Liberation Sans',sans-serif;letter-spacing:0.85px;left:817.42px;width:400px;text-align:center;">01:17:46</div>
<div class="a t" style="top:281.96px;font-size:9.5px;line-height:9.5px;font-weight:normal;color:#551818;font-family:'Liberation Sans',sans-serif;letter-spacing:0.85px;left:907.92px;width:400px;text-align:center;">120</div>
<div class="a t" style="top:281.96px;font-size:9.5px;line-height:9.5px;font-weight:normal;color:#551818;font-family:'Liberation Sans',sans-serif;letter-spacing:0.85px;left:974.92px;width:400px;text-align:center;">88,815</div>
<div class="a" style="left:138px;top:294px;width:1072px;height:14px;background:#e9d9d9;"></div>
<div class="a t" style="top:295.96px;font-size:9.5px;line-height:9.5px;font-weight:normal;color:#551818;font-family:'Liberation Sans',sans-serif;letter-spacing:0.85px;left:-49.57px;width:400px;text-align:center;">2</div>
<svg class="a" style="left:160px;top:295px" width="18" height="12"><rect x="0" y="0" width="18" height="12" fill="#000"/><rect x="1" y="1" width="16" height="10" fill="url(#gkz)"/><circle cx="9" cy="6" r="2.2" fill="#b8d860" opacity=".8"/></svg>
<div class="a t" style="top:295.96px;font-size:9.5px;line-height:9.5px;font-weight:normal;color:#551818;font-family:'Liberation Sans',sans-serif;letter-spacing:0.62px;left:181.00px;">GG Allin</div>
<div class="a t" style="top:295.96px;font-size:9.5px;line-height:9.5px;font-weight:normal;color:#551818;font-family:'Liberation Sans',sans-serif;letter-spacing:0.85px;left:259.85px;width:400px;text-align:right;">150</div>
<div class="a t" style="top:295.54px;font-size:10px;line-height:10px;font-weight:bold;color:#8a6a6a;font-family:'Liberation Sans',sans-serif;left:465.00px;width:400px;text-align:center;">:</div>
<div class="a t" style="top:295.96px;font-size:9.5px;line-height:9.5px;font-weight:normal;color:#551818;font-family:'Liberation Sans',sans-serif;letter-spacing:0.85px;left:671.00px;">5</div>
<div class="a t" style="top:295.96px;font-size:9.5px;line-height:9.5px;font-weight:normal;color:#551818;font-family:'Liberation Sans',sans-serif;letter-spacing:0.85px;left:514.42px;width:400px;text-align:center;">11</div>
<div class="a t" style="top:295.96px;font-size:9.5px;line-height:9.5px;font-weight:normal;color:#551818;font-family:'Liberation Sans',sans-serif;letter-spacing:0.85px;left:580.92px;width:400px;text-align:center;">0.07</div>
<div class="a t" style="top:295.96px;font-size:9.5px;line-height:9.5px;font-weight:normal;color:#551818;font-family:'Liberation Sans',sans-serif;letter-spacing:0.85px;left:659.42px;width:400px;text-align:center;">19%</div>
<div class="a t" style="top:295.96px;font-size:9.5px;line-height:9.5px;font-weight:normal;color:#551818;font-family:'Liberation Sans',sans-serif;letter-spacing:0.85px;left:726.42px;width:400px;text-align:center;">56</div>
<div class="a t" style="top:295.96px;font-size:9.5px;line-height:9.5px;font-weight:normal;color:#551818;font-family:'Liberation Sans',sans-serif;letter-spacing:0.85px;left:817.42px;width:400px;text-align:center;">01:23:12</div>
<div class="a t" style="top:295.96px;font-size:9.5px;line-height:9.5px;font-weight:normal;color:#551818;font-family:'Liberation Sans',sans-serif;letter-spacing:0.85px;left:907.92px;width:400px;text-align:center;">88</div>
<div class="a t" style="top:295.96px;font-size:9.5px;line-height:9.5px;font-weight:normal;color:#551818;font-family:'Liberation Sans',sans-serif;letter-spacing:0.85px;left:974.92px;width:400px;text-align:center;">445,098</div>
<div class="a" style="left:138px;top:308px;width:1072px;height:14px;background:#e9d9d9;"></div>
<div class="a t" style="top:309.96px;font-size:9.5px;line-height:9.5px;font-weight:normal;color:#551818;font-family:'Liberation Sans',sans-serif;letter-spacing:0.85px;left:-49.57px;width:400px;text-align:center;">3</div>
<svg class="a" style="left:160px;top:309px" width="18" height="12"><rect x="0" y="0" width="18" height="12" fill="#000"/><rect x="1" y="1" width="16" height="10" fill="url(#gru)"/></svg>
<div class="a t" style="top:309.96px;font-size:9.5px;line-height:9.5px;font-weight:normal;color:#551818;font-family:'Liberation Sans',sans-serif;letter-spacing:0.62px;left:181.00px;">emzy</div>
<div class="a t" style="top:309.96px;font-size:9.5px;line-height:9.5px;font-weight:normal;color:#551818;font-family:'Liberation Sans',sans-serif;letter-spacing:0.85px;left:259.85px;width:400px;text-align:right;">136</div>
<div class="a t" style="top:309.54px;font-size:10px;line-height:10px;font-weight:bold;color:#8a6a6a;font-family:'Liberation Sans',sans-serif;left:465.00px;width:400px;text-align:center;">:</div>
<div class="a t" style="top:309.96px;font-size:9.5px;line-height:9.5px;font-weight:normal;color:#551818;font-family:'Liberation Sans',sans-serif;letter-spacing:0.85px;left:671.00px;">4</div>
<div class="a t" style="top:309.96px;font-size:9.5px;line-height:9.5px;font-weight:normal;color:#551818;font-family:'Liberation Sans',sans-serif;letter-spacing:0.85px;left:514.42px;width:400px;text-align:center;">16</div>
<div class="a t" style="top:309.96px;font-size:9.5px;line-height:9.5px;font-weight:normal;color:#551818;font-family:'Liberation Sans',sans-serif;letter-spacing:0.85px;left:580.92px;width:400px;text-align:center;">0.12</div>
<div class="a t" style="top:309.96px;font-size:9.5px;line-height:9.5px;font-weight:normal;color:#551818;font-family:'Liberation Sans',sans-serif;letter-spacing:0.85px;left:659.42px;width:400px;text-align:center;">15%</div>
<div class="a t" style="top:309.96px;font-size:9.5px;line-height:9.5px;font-weight:normal;color:#551818;font-family:'Liberation Sans',sans-serif;letter-spacing:0.85px;left:726.42px;width:400px;text-align:center;">80</div>
<div class="a t" style="top:309.96px;font-size:9.5px;line-height:9.5px;font-weight:normal;color:#551818;font-family:'Liberation Sans',sans-serif;letter-spacing:0.85px;left:817.42px;width:400px;text-align:center;">01:13:59</div>
<div class="a t" style="top:309.96px;font-size:9.5px;line-height:9.5px;font-weight:normal;color:#551818;font-family:'Liberation Sans',sans-serif;letter-spacing:0.85px;left:907.92px;width:400px;text-align:center;">249</div>
<div class="a t" style="top:309.96px;font-size:9.5px;line-height:9.5px;font-weight:normal;color:#551818;font-family:'Liberation Sans',sans-serif;letter-spacing:0.85px;left:974.92px;width:400px;text-align:center;">2,486,626</div>
<div class="a" style="left:138px;top:322px;width:1072px;height:14px;background:#e9d9d9;"></div>
<div class="a t" style="top:323.96px;font-size:9.5px;line-height:9.5px;font-weight:normal;color:#551818;font-family:'Liberation Sans',sans-serif;letter-spacing:0.85px;left:-49.57px;width:400px;text-align:center;">4</div>
<svg class="a" style="left:160px;top:323px" width="18" height="12"><rect x="0" y="0" width="18" height="12" fill="#000"/><rect x="1" y="1" width="16" height="10" fill="url(#gru)"/></svg>
<div class="a t" style="top:323.96px;font-size:9.5px;line-height:9.5px;font-weight:normal;color:#551818;font-family:'Liberation Sans',sans-serif;letter-spacing:0.62px;left:181.00px;">Макс</div>
<div class="a t" style="top:323.96px;font-size:9.5px;line-height:9.5px;font-weight:normal;color:#551818;font-family:'Liberation Sans',sans-serif;letter-spacing:0.85px;left:259.85px;width:400px;text-align:right;">130</div>
<div class="a t" style="top:323.54px;font-size:10px;line-height:10px;font-weight:bold;color:#8a6a6a;font-family:'Liberation Sans',sans-serif;left:465.00px;width:400px;text-align:center;">:</div>
<div class="a t" style="top:323.96px;font-size:9.5px;line-height:9.5px;font-weight:normal;color:#551818;font-family:'Liberation Sans',sans-serif;letter-spacing:0.85px;left:671.00px;">5</div>
<div class="a t" style="top:323.96px;font-size:9.5px;line-height:9.5px;font-weight:normal;color:#551818;font-family:'Liberation Sans',sans-serif;letter-spacing:0.85px;left:514.42px;width:400px;text-align:center;">10</div>
<div class="a t" style="top:323.96px;font-size:9.5px;line-height:9.5px;font-weight:normal;color:#551818;font-family:'Liberation Sans',sans-serif;letter-spacing:0.85px;left:580.92px;width:400px;text-align:center;">0.08</div>
<div class="a t" style="top:323.96px;font-size:9.5px;line-height:9.5px;font-weight:normal;color:#551818;font-family:'Liberation Sans',sans-serif;letter-spacing:0.85px;left:659.42px;width:400px;text-align:center;">16%</div>
<div class="a t" style="top:323.96px;font-size:9.5px;line-height:9.5px;font-weight:normal;color:#551818;font-family:'Liberation Sans',sans-serif;letter-spacing:0.85px;left:726.42px;width:400px;text-align:center;">70</div>
<div class="a t" style="top:323.96px;font-size:9.5px;line-height:9.5px;font-weight:normal;color:#551818;font-family:'Liberation Sans',sans-serif;letter-spacing:0.85px;left:817.42px;width:400px;text-align:center;">03:47:11</div>
<div class="a t" style="top:323.96px;font-size:9.5px;line-height:9.5px;font-weight:normal;color:#551818;font-family:'Liberation Sans',sans-serif;letter-spacing:0.85px;left:907.92px;width:400px;text-align:center;">406</div>
<div class="a t" style="top:323.96px;font-size:9.5px;line-height:9.5px;font-weight:normal;color:#551818;font-family:'Liberation Sans',sans-serif;letter-spacing:0.85px;left:974.92px;width:400px;text-align:center;">6,074</div>
<div class="a" style="left:138px;top:336px;width:1072px;height:14px;background:#e9d9d9;"></div>
<div class="a t" style="top:337.96px;font-size:9.5px;line-height:9.5px;font-weight:normal;color:#551818;font-family:'Liberation Sans',sans-serif;letter-spacing:0.85px;left:-49.57px;width:400px;text-align:center;">5</div>
<svg class="a" style="left:160px;top:337px" width="18" height="12"><rect x="0" y="0" width="18" height="12" fill="#000"/><rect x="1" y="1" width="16" height="10" fill="url(#gru)"/></svg>
<div class="a t" style="top:337.96px;font-size:9.5px;line-height:9.5px;font-weight:normal;color:#551818;font-family:'Liberation Sans',sans-serif;letter-spacing:0.62px;left:181.00px;">Sinyachka</div>
<div class="a t" style="top:337.96px;font-size:9.5px;line-height:9.5px;font-weight:normal;color:#551818;font-family:'Liberation Sans',sans-serif;letter-spacing:0.85px;left:259.85px;width:400px;text-align:right;">126</div>
<div class="a t" style="top:337.54px;font-size:10px;line-height:10px;font-weight:bold;color:#8a6a6a;font-family:'Liberation Sans',sans-serif;left:465.00px;width:400px;text-align:center;">:</div>
<div class="a t" style="top:337.96px;font-size:9.5px;line-height:9.5px;font-weight:normal;color:#551818;font-family:'Liberation Sans',sans-serif;letter-spacing:0.85px;left:671.00px;">5</div>
<div class="a t" style="top:337.96px;font-size:9.5px;line-height:9.5px;font-weight:normal;color:#551818;font-family:'Liberation Sans',sans-serif;letter-spacing:0.85px;left:514.42px;width:400px;text-align:center;">16</div>
<div class="a t" style="top:337.96px;font-size:9.5px;line-height:9.5px;font-weight:normal;color:#551818;font-family:'Liberation Sans',sans-serif;letter-spacing:0.85px;left:580.92px;width:400px;text-align:center;">0.13</div>
<div class="a t" style="top:337.96px;font-size:9.5px;line-height:9.5px;font-weight:normal;color:#551818;font-family:'Liberation Sans',sans-serif;letter-spacing:0.85px;left:659.42px;width:400px;text-align:center;">9%</div>
<div class="a t" style="top:337.96px;font-size:9.5px;line-height:9.5px;font-weight:normal;color:#551818;font-family:'Liberation Sans',sans-serif;letter-spacing:0.85px;left:726.42px;width:400px;text-align:center;">34</div>
<div class="a t" style="top:337.96px;font-size:9.5px;line-height:9.5px;font-weight:normal;color:#551818;font-family:'Liberation Sans',sans-serif;letter-spacing:0.85px;left:817.42px;width:400px;text-align:center;">01:20:34</div>
<div class="a t" style="top:337.96px;font-size:9.5px;line-height:9.5px;font-weight:normal;color:#551818;font-family:'Liberation Sans',sans-serif;letter-spacing:0.85px;left:907.92px;width:400px;text-align:center;">144</div>
<div class="a t" style="top:337.96px;font-size:9.5px;line-height:9.5px;font-weight:normal;color:#551818;font-family:'Liberation Sans',sans-serif;letter-spacing:0.85px;left:974.92px;width:400px;text-align:center;">48,722</div>
<div class="a" style="left:138px;top:350px;width:1072px;height:14px;background:#e9d9d9;"></div>
<div class="a t" style="top:351.96px;font-size:9.5px;line-height:9.5px;font-weight:normal;color:#551818;font-family:'Liberation Sans',sans-serif;letter-spacing:0.85px;left:-49.57px;width:400px;text-align:center;">6</div>
<svg class="a" style="left:160px;top:351px" width="18" height="12"><rect x="0" y="0" width="18" height="12" fill="#000"/><rect x="1" y="1" width="16" height="10" fill="url(#gru)"/></svg>
<div class="a t" style="top:351.96px;font-size:9.5px;line-height:9.5px;font-weight:normal;color:#551818;font-family:'Liberation Sans',sans-serif;letter-spacing:0.62px;left:181.00px;">Nelly_milashka</div>
<div class="a t" style="top:351.96px;font-size:9.5px;line-height:9.5px;font-weight:normal;color:#551818;font-family:'Liberation Sans',sans-serif;letter-spacing:0.85px;left:259.85px;width:400px;text-align:right;">106</div>
<div class="a t" style="top:351.54px;font-size:10px;line-height:10px;font-weight:bold;color:#8a6a6a;font-family:'Liberation Sans',sans-serif;left:465.00px;width:400px;text-align:center;">:</div>
<div class="a t" style="top:351.96px;font-size:9.5px;line-height:9.5px;font-weight:normal;color:#551818;font-family:'Liberation Sans',sans-serif;letter-spacing:0.85px;left:671.00px;">7</div>
<div class="a t" style="top:351.96px;font-size:9.5px;line-height:9.5px;font-weight:normal;color:#551818;font-family:'Liberation Sans',sans-serif;letter-spacing:0.85px;left:514.42px;width:400px;text-align:center;">5</div>
<div class="a t" style="top:351.96px;font-size:9.5px;line-height:9.5px;font-weight:normal;color:#551818;font-family:'Liberation Sans',sans-serif;letter-spacing:0.85px;left:580.92px;width:400px;text-align:center;">0.05</div>
<div class="a t" style="top:351.96px;font-size:9.5px;line-height:9.5px;font-weight:normal;color:#551818;font-family:'Liberation Sans',sans-serif;letter-spacing:0.85px;left:659.42px;width:400px;text-align:center;">17%</div>
<div class="a t" style="top:351.96px;font-size:9.5px;line-height:9.5px;font-weight:normal;color:#551818;font-family:'Liberation Sans',sans-serif;letter-spacing:0.85px;left:726.42px;width:400px;text-align:center;">44</div>
<div class="a t" style="top:351.96px;font-size:9.5px;line-height:9.5px;font-weight:normal;color:#551818;font-family:'Liberation Sans',sans-serif;letter-spacing:0.85px;left:817.42px;width:400px;text-align:center;">01:09:30</div>
<div class="a t" style="top:351.96px;font-size:9.5px;line-height:9.5px;font-weight:normal;color:#551818;font-family:'Liberation Sans',sans-serif;letter-spacing:0.85px;left:907.92px;width:400px;text-align:center;">55</div>
<div class="a t" style="top:351.96px;font-size:9.5px;line-height:9.5px;font-weight:normal;color:#551818;font-family:'Liberation Sans',sans-serif;letter-spacing:0.85px;left:974.92px;width:400px;text-align:center;">297,787</div>
<div class="a" style="left:138px;top:364px;width:1072px;height:14px;background:#e9d9d9;"></div>
<div class="a t" style="top:365.96px;font-size:9.5px;line-height:9.5px;font-weight:normal;color:#551818;font-family:'Liberation Sans',sans-serif;letter-spacing:0.85px;left:-49.57px;width:400px;text-align:center;">7</div>
<svg class="a" style="left:160px;top:365px" width="18" height="12"><rect x="0" y="0" width="18" height="12" fill="#000"/><rect x="1" y="1" width="16" height="10" fill="url(#gru)"/></svg>
<div class="a t" style="top:365.96px;font-size:9.5px;line-height:9.5px;font-weight:normal;color:#551818;font-family:'Liberation Sans',sans-serif;letter-spacing:0.62px;left:181.00px;">Скромный</div>
<div class="a t" style="top:365.96px;font-size:9.5px;line-height:9.5px;font-weight:normal;color:#551818;font-family:'Liberation Sans',sans-serif;letter-spacing:0.85px;left:259.85px;width:400px;text-align:right;">91</div>
<div class="a t" style="top:365.54px;font-size:10px;line-height:10px;font-weight:bold;color:#8a6a6a;font-family:'Liberation Sans',sans-serif;left:465.00px;width:400px;text-align:center;">:</div>
<div class="a t" style="top:365.96px;font-size:9.5px;line-height:9.5px;font-weight:normal;color:#551818;font-family:'Liberation Sans',sans-serif;letter-spacing:0.85px;left:671.00px;">4</div>
<div class="a t" style="top:365.96px;font-size:9.5px;line-height:9.5px;font-weight:normal;color:#551818;font-family:'Liberation Sans',sans-serif;letter-spacing:0.85px;left:514.42px;width:400px;text-align:center;">13</div>
<div class="a t" style="top:365.96px;font-size:9.5px;line-height:9.5px;font-weight:normal;color:#551818;font-family:'Liberation Sans',sans-serif;letter-spacing:0.85px;left:580.92px;width:400px;text-align:center;">0.14</div>
<div class="a t" style="top:365.96px;font-size:9.5px;line-height:9.5px;font-weight:normal;color:#551818;font-family:'Liberation Sans',sans-serif;letter-spacing:0.85px;left:659.42px;width:400px;text-align:center;">6%</div>
<div class="a t" style="top:365.96px;font-size:9.5px;line-height:9.5px;font-weight:normal;color:#551818;font-family:'Liberation Sans',sans-serif;letter-spacing:0.85px;left:726.42px;width:400px;text-align:center;">34</div>
<div class="a t" style="top:365.96px;font-size:9.5px;line-height:9.5px;font-weight:normal;color:#551818;font-family:'Liberation Sans',sans-serif;letter-spacing:0.85px;left:817.42px;width:400px;text-align:center;">01:21:30</div>
<div class="a t" style="top:365.96px;font-size:9.5px;line-height:9.5px;font-weight:normal;color:#551818;font-family:'Liberation Sans',sans-serif;letter-spacing:0.85px;left:907.92px;width:400px;text-align:center;">143</div>
<div class="a t" style="top:365.96px;font-size:9.5px;line-height:9.5px;font-weight:normal;color:#551818;font-family:'Liberation Sans',sans-serif;letter-spacing:0.85px;left:974.92px;width:400px;text-align:center;">60,344</div>
<div class="a" style="left:138px;top:378px;width:1072px;height:14px;background:#e9d9d9;"></div>
<div class="a t" style="top:379.96px;font-size:9.5px;line-height:9.5px;font-weight:normal;color:#551818;font-family:'Liberation Sans',sans-serif;letter-spacing:0.85px;left:-49.57px;width:400px;text-align:center;">8</div>
<svg class="a" style="left:160px;top:379px" width="18" height="12"><rect x="0" y="0" width="18" height="12" fill="#000"/><rect x="1" y="1" width="16" height="10" fill="url(#gru)"/></svg>
<div class="a t" style="top:379.96px;font-size:9.5px;line-height:9.5px;font-weight:normal;color:#551818;font-family:'Liberation Sans',sans-serif;letter-spacing:0.62px;left:181.00px;">sneg</div>
<div class="a t" style="top:379.96px;font-size:9.5px;line-height:9.5px;font-weight:normal;color:#551818;font-family:'Liberation Sans',sans-serif;letter-spacing:0.85px;left:259.85px;width:400px;text-align:right;">90</div>
<div class="a t" style="top:379.54px;font-size:10px;line-height:10px;font-weight:bold;color:#8a6a6a;font-family:'Liberation Sans',sans-serif;left:465.00px;width:400px;text-align:center;">:</div>
<div class="a t" style="top:379.96px;font-size:9.5px;line-height:9.5px;font-weight:normal;color:#551818;font-family:'Liberation Sans',sans-serif;letter-spacing:0.85px;left:671.00px;">5</div>
<div class="a t" style="top:379.96px;font-size:9.5px;line-height:9.5px;font-weight:normal;color:#551818;font-family:'Liberation Sans',sans-serif;letter-spacing:0.85px;left:514.42px;width:400px;text-align:center;">5</div>
<div class="a t" style="top:379.96px;font-size:9.5px;line-height:9.5px;font-weight:normal;color:#551818;font-family:'Liberation Sans',sans-serif;letter-spacing:0.85px;left:580.92px;width:400px;text-align:center;">0.06</div>
<div class="a t" style="top:379.96px;font-size:9.5px;line-height:9.5px;font-weight:normal;color:#551818;font-family:'Liberation Sans',sans-serif;letter-spacing:0.85px;left:659.42px;width:400px;text-align:center;">9%</div>
<div class="a t" style="top:379.96px;font-size:9.5px;line-height:9.5px;font-weight:normal;color:#551818;font-family:'Liberation Sans',sans-serif;letter-spacing:0.85px;left:726.42px;width:400px;text-align:center;">88</div>
<div class="a t" style="top:379.96px;font-size:9.5px;line-height:9.5px;font-weight:normal;color:#551818;font-family:'Liberation Sans',sans-serif;letter-spacing:0.85px;left:817.42px;width:400px;text-align:center;">00:46:02</div>
<div class="a t" style="top:379.96px;font-size:9.5px;line-height:9.5px;font-weight:normal;color:#551818;font-family:'Liberation Sans',sans-serif;letter-spacing:0.85px;left:907.92px;width:400px;text-align:center;">51</div>
<div class="a t" style="top:379.96px;font-size:9.5px;line-height:9.5px;font-weight:normal;color:#551818;font-family:'Liberation Sans',sans-serif;letter-spacing:0.85px;left:974.92px;width:400px;text-align:center;">92,727</div>
<div class="a" style="left:138px;top:392px;width:1072px;height:14px;background:#e9d9d9;"></div>
<div class="a t" style="top:393.96px;font-size:9.5px;line-height:9.5px;font-weight:normal;color:#551818;font-family:'Liberation Sans',sans-serif;letter-spacing:0.85px;left:-49.57px;width:400px;text-align:center;">9</div>
<svg class="a" style="left:160px;top:393px" width="18" height="12"><rect x="0" y="0" width="18" height="12" fill="#000"/><rect x="1" y="1" width="16" height="10" fill="url(#gru)"/></svg>
<div class="a t" style="top:393.96px;font-size:9.5px;line-height:9.5px;font-weight:normal;color:#551818;font-family:'Liberation Sans',sans-serif;letter-spacing:0.62px;left:181.00px;">cold dry</div>
<div class="a t" style="top:393.96px;font-size:9.5px;line-height:9.5px;font-weight:normal;color:#551818;font-family:'Liberation Sans',sans-serif;letter-spacing:0.85px;left:259.85px;width:400px;text-align:right;">73</div>
<div class="a t" style="top:393.54px;font-size:10px;line-height:10px;font-weight:bold;color:#8a6a6a;font-family:'Liberation Sans',sans-serif;left:465.00px;width:400px;text-align:center;">:</div>
<div class="a t" style="top:393.96px;font-size:9.5px;line-height:9.5px;font-weight:normal;color:#551818;font-family:'Liberation Sans',sans-serif;letter-spacing:0.85px;left:671.00px;">10</div>
<div class="a t" style="top:393.96px;font-size:9.5px;line-height:9.5px;font-weight:normal;color:#551818;font-family:'Liberation Sans',sans-serif;letter-spacing:0.85px;left:514.42px;width:400px;text-align:center;">4</div>
<div class="a t" style="top:393.96px;font-size:9.5px;line-height:9.5px;font-weight:normal;color:#551818;font-family:'Liberation Sans',sans-serif;letter-spacing:0.85px;left:580.92px;width:400px;text-align:center;">0.05</div>
<div class="a t" style="top:393.96px;font-size:9.5px;line-height:9.5px;font-weight:normal;color:#551818;font-family:'Liberation Sans',sans-serif;letter-spacing:0.85px;left:659.42px;width:400px;text-align:center;">9%</div>
<div class="a t" style="top:393.96px;font-size:9.5px;line-height:9.5px;font-weight:normal;color:#551818;font-family:'Liberation Sans',sans-serif;letter-spacing:0.85px;left:726.42px;width:400px;text-align:center;">40</div>
<div class="a t" style="top:393.96px;font-size:9.5px;line-height:9.5px;font-weight:normal;color:#551818;font-family:'Liberation Sans',sans-serif;letter-spacing:0.85px;left:817.42px;width:400px;text-align:center;">02:10:14</div>
<div class="a t" style="top:393.96px;font-size:9.5px;line-height:9.5px;font-weight:normal;color:#551818;font-family:'Liberation Sans',sans-serif;letter-spacing:0.85px;left:907.92px;width:400px;text-align:center;">178</div>
<div class="a t" style="top:393.96px;font-size:9.5px;line-height:9.5px;font-weight:normal;color:#551818;font-family:'Liberation Sans',sans-serif;letter-spacing:0.85px;left:974.92px;width:400px;text-align:center;">152,994</div>
<div class="a" style="left:138px;top:406px;width:1072px;height:14px;background:#e9d9d9;"></div>
<div class="a t" style="top:407.96px;font-size:9.5px;line-height:9.5px;font-weight:normal;color:#551818;font-family:'Liberation Sans',sans-serif;letter-spacing:0.85px;left:-49.57px;width:400px;text-align:center;">10</div>
<svg class="a" style="left:160px;top:407px" width="18" height="12"><rect x="0" y="0" width="18" height="12" fill="#000"/><rect x="1" y="1" width="16" height="10" fill="url(#gru)"/></svg>
<div class="a t" style="top:407.96px;font-size:9.5px;line-height:9.5px;font-weight:normal;color:#551818;font-family:'Liberation Sans',sans-serif;letter-spacing:0.62px;left:181.00px;">L.D.N. **</div>
<div class="a t" style="top:407.96px;font-size:9.5px;line-height:9.5px;font-weight:normal;color:#551818;font-family:'Liberation Sans',sans-serif;letter-spacing:0.85px;left:259.85px;width:400px;text-align:right;">0</div>
<div class="a t" style="top:407.54px;font-size:10px;line-height:10px;font-weight:bold;color:#8a6a6a;font-family:'Liberation Sans',sans-serif;left:465.00px;width:400px;text-align:center;">:</div>
<div class="a t" style="top:407.96px;font-size:9.5px;line-height:9.5px;font-weight:normal;color:#551818;font-family:'Liberation Sans',sans-serif;letter-spacing:0.85px;left:671.00px;">1</div>
<div class="a t" style="top:407.96px;font-size:9.5px;line-height:9.5px;font-weight:normal;color:#551818;font-family:'Liberation Sans',sans-serif;letter-spacing:0.85px;left:514.42px;width:400px;text-align:center;">0</div>
<div class="a t" style="top:407.96px;font-size:9.5px;line-height:9.5px;font-weight:normal;color:#551818;font-family:'Liberation Sans',sans-serif;letter-spacing:0.85px;left:580.92px;width:400px;text-align:center;">0.00</div>
<div class="a t" style="top:407.96px;font-size:9.5px;line-height:9.5px;font-weight:normal;color:#551818;font-family:'Liberation Sans',sans-serif;letter-spacing:0.85px;left:659.42px;width:400px;text-align:center;">0%</div>
<div class="a t" style="top:407.96px;font-size:9.5px;line-height:9.5px;font-weight:normal;color:#551818;font-family:'Liberation Sans',sans-serif;letter-spacing:0.85px;left:726.42px;width:400px;text-align:center;">59</div>
<div class="a t" style="top:407.96px;font-size:9.5px;line-height:9.5px;font-weight:normal;color:#551818;font-family:'Liberation Sans',sans-serif;letter-spacing:0.85px;left:817.42px;width:400px;text-align:center;">00:04:25</div>
<div class="a t" style="top:407.96px;font-size:9.5px;line-height:9.5px;font-weight:normal;color:#551818;font-family:'Liberation Sans',sans-serif;letter-spacing:0.85px;left:907.92px;width:400px;text-align:center;">0</div>
<div class="a t" style="top:407.96px;font-size:9.5px;line-height:9.5px;font-weight:normal;color:#551818;font-family:'Liberation Sans',sans-serif;letter-spacing:0.85px;left:974.92px;width:400px;text-align:center;">629,019</div>
<div class="a" style="left:138px;top:420px;width:1072px;height:1px;background:#7a2020;"></div>
<div class="a" style="left:138px;top:421px;width:1072px;height:13px;background:#e9d9d9;"></div>
<div class="a t" style="top:422.96px;font-size:9.5px;line-height:9.5px;font-weight:normal;color:#551818;font-family:'Liberation Sans',sans-serif;letter-spacing:0.62px;left:181.00px;"></div>
<div class="a t" style="top:422.96px;font-size:9.5px;line-height:9.5px;font-weight:normal;color:#551818;font-family:'Liberation Sans',sans-serif;letter-spacing:0.85px;left:259.85px;width:400px;text-align:right;">1092</div>
<div class="a t" style="top:422.54px;font-size:10px;line-height:10px;font-weight:bold;color:#8a6a6a;font-family:'Liberation Sans',sans-serif;left:465.00px;width:400px;text-align:center;">:</div>
<div class="a t" style="top:422.96px;font-size:9.5px;line-height:9.5px;font-weight:normal;color:#551818;font-family:'Liberation Sans',sans-serif;letter-spacing:0.85px;left:671.00px;">51</div>
<div class="a t" style="top:422.96px;font-size:9.5px;line-height:9.5px;font-weight:normal;color:#551818;font-family:'Liberation Sans',sans-serif;letter-spacing:0.85px;left:514.42px;width:400px;text-align:center;">89</div>
<div class="a t" style="top:422.96px;font-size:9.5px;line-height:9.5px;font-weight:normal;color:#551818;font-family:'Liberation Sans',sans-serif;letter-spacing:0.85px;left:580.92px;width:400px;text-align:center;">0.00</div>
<div class="a t" style="top:422.96px;font-size:9.5px;line-height:9.5px;font-weight:normal;color:#551818;font-family:'Liberation Sans',sans-serif;letter-spacing:0.85px;left:659.42px;width:400px;text-align:center;">0%</div>
<div class="a t" style="top:422.96px;font-size:9.5px;line-height:9.5px;font-weight:normal;color:#551818;font-family:'Liberation Sans',sans-serif;letter-spacing:0.85px;left:726.42px;width:400px;text-align:center;">2</div>
<div class="a t" style="top:422.96px;font-size:9.5px;line-height:9.5px;font-weight:normal;color:#551818;font-family:'Liberation Sans',sans-serif;letter-spacing:0.85px;left:817.42px;width:400px;text-align:center;">14:34:23</div>
<div class="a t" style="top:422.96px;font-size:9.5px;line-height:9.5px;font-weight:normal;color:#551818;font-family:'Liberation Sans',sans-serif;letter-spacing:0.85px;left:907.92px;width:400px;text-align:center;">-</div>
<div class="a t" style="top:422.96px;font-size:9.5px;line-height:9.5px;font-weight:normal;color:#551818;font-family:'Liberation Sans',sans-serif;letter-spacing:0.85px;left:974.92px;width:400px;text-align:center;">430,821</div>
<div class="a t" style="top:422.54px;font-size:10px;line-height:10px;font-weight:bold;color:#5e1c1c;font-family:'Liberation Sans',sans-serif;letter-spacing:0.6px;left:160.00px;">Зараженные</div>
<div class="a" style="left:165px;top:436px;width:1018px;height:19px;background:linear-gradient(#4d4b4d,#2e2e2e);"></div>
<div class="a" style="left:165px;top:455px;width:1018px;height:1px;background:#a6a6a6;"></div>
<div class="a t" style="top:440.54px;font-size:10px;line-height:10px;font-weight:bold;color:#f4f4f4;font-family:'Liberation Sans',sans-serif;letter-spacing:0.1px;left:172.00px;">24 Часа</div>
<div class="a" style="left:165px;top:456px;width:1018px;height:208px;background:#282828;"></div>
<div class="a" style="left:239px;top:456px;width:871px;height:208px;background:#262626;"></div>
<svg class="a" style="left:0;top:0" width="1366" height="738" viewBox="0 0 1366 738">
<defs><clipPath id="pc"><rect x="269" y="475" width="811" height="171"/></clipPath></defs>
<rect x="269" y="475" width="11" height="171" fill="#eaece9"/>
<rect x="280" y="475" width="8" height="171" fill="#fdfdfd"/>
<rect x="288" y="475" width="13" height="171" fill="#eaece9"/>
<rect x="301" y="475" width="11" height="171" fill="#fdfdfd"/>
<rect x="312" y="475" width="13" height="171" fill="#eaece9"/>
<rect x="325" y="475" width="11" height="171" fill="#fdfdfd"/>
<rect x="336" y="475" width="19" height="171" fill="#eaece9"/>
<rect x="355" y="475" width="17" height="171" fill="#fdfdfd"/>
<rect x="372" y="475" width="10" height="171" fill="#eaece9"/>
<rect x="382" y="475" width="8" height="171" fill="#fdfdfd"/>
<rect x="390" y="475" width="27" height="171" fill="#eaece9"/>
<rect x="417" y="475" width="9" height="171" fill="#fdfdfd"/>
<rect x="426" y="475" width="13" height="171" fill="#eaece9"/>
<rect x="439" y="475" width="8" height="171" fill="#fdfdfd"/>
<rect x="447" y="475" width="13" height="171" fill="#eaece9"/>
<rect x="460" y="475" width="15" height="171" fill="#fdfdfd"/>
<rect x="475" y="475" width="12" height="171" fill="#eaece9"/>
<rect x="487" y="475" width="15" height="171" fill="#fdfdfd"/>
<rect x="502" y="475" width="15" height="171" fill="#eaece9"/>
<rect x="517" y="475" width="11" height="171" fill="#fdfdfd"/>
<rect x="528" y="475" width="16" height="171" fill="#eaece9"/>
<rect x="544" y="475" width="11" height="171" fill="#fdfdfd"/>
<rect x="555" y="475" width="16" height="171" fill="#eaece9"/>
<rect x="571" y="475" width="11" height="171" fill="#fdfdfd"/>
<rect x="582" y="475" width="9" height="171" fill="#eaece9"/>
<rect x="591" y="475" width="12" height="171" fill="#fdfdfd"/>
<rect x="603" y="475" width="25" height="171" fill="#eaece9"/>
<rect x="628" y="475" width="17" height="171" fill="#fdfdfd"/>
<rect x="645" y="475" width="19" height="171" fill="#eaece9"/>
<rect x="664" y="475" width="11" height="171" fill="#fdfdfd"/>
<rect x="675" y="475" width="10" height="171" fill="#eaece9"/>
<rect x="685" y="475" width="11" height="171" fill="#fdfdfd"/>
<rect x="696" y="475" width="34" height="171" fill="#eaece9"/>
<rect x="730" y="475" width="11" height="171" fill="#fdfdfd"/>
<rect x="741" y="475" width="19" height="171" fill="#eaece9"/>
<rect x="760" y="475" width="11" height="171" fill="#fdfdfd"/>
<rect x="771" y="475" width="16" height="171" fill="#eaece9"/>
<rect x="787" y="475" width="14" height="171" fill="#fdfdfd"/>
<rect x="801" y="475" width="16" height="171" fill="#eaece9"/>
<rect x="817" y="475" width="17" height="171" fill="#fdfdfd"/>
<rect x="834" y="475" width="10" height="171" fill="#eaece9"/>
<rect x="844" y="475" width="14" height="171" fill="#fdfdfd"/>
<rect x="858" y="475" width="16" height="171" fill="#eaece9"/>
<rect x="874" y="475" width="17" height="171" fill="#fdfdfd"/>
<rect x="891" y="475" width="22" height="171" fill="#eaece9"/>
<rect x="913" y="475" width="14" height="171" fill="#fdfdfd"/>
<rect x="927" y="475" width="18" height="171" fill="#eaece9"/>
<rect x="945" y="475" width="21" height="171" fill="#fdfdfd"/>
<rect x="966" y="475" width="30" height="171" fill="#eaece9"/>
<rect x="996" y="475" width="24" height="171" fill="#fdfdfd"/>
<rect x="1020" y="475" width="18" height="171" fill="#eaece9"/>
<rect x="1038" y="475" width="30" height="171" fill="#fdfdfd"/>
<rect x="1068" y="475" width="12" height="171" fill="#eaece9"/>
<line x1="269" y1="623.5" x2="1080" y2="623.5" stroke="#dcdcdc" stroke-width="1" stroke-dasharray="4,5"/>
<line x1="269" y1="602.5" x2="1080" y2="602.5" stroke="#dcdcdc" stroke-width="1" stroke-dasharray="4,5"/>
<line x1="269" y1="581.5" x2="1080" y2="581.5" stroke="#dcdcdc" stroke-width="1" stroke-dasharray="4,5"/>
<line x1="269" y1="538.5" x2="1080" y2="538.5" stroke="#dcdcdc" stroke-width="1" stroke-dasharray="4,5"/>
<line x1="269" y1="517.5" x2="1080" y2="517.5" stroke="#dcdcdc" stroke-width="1" stroke-dasharray="4,5"/>
<line x1="269" y1="560.5" x2="1080" y2="560.5" stroke="#a8a8a8" stroke-width="1" stroke-dasharray="2,4"/>
<line x1="269" y1="496.5" x2="1080" y2="496.5" stroke="#6e6e6e" stroke-width="1"/>
<g font-family="Liberation Mono,monospace" font-size="8.3" fill="#484848">
<text transform="translate(278.0,478) rotate(-90)" text-anchor="end">c13m2_southpinestream</text>
<text transform="translate(286.5,478) rotate(-90)" text-anchor="end">c13m3_memorialbridge</text>
<text transform="translate(299.5,478) rotate(-90)" text-anchor="end">c13m4_cutthroatcreek</text>
<text transform="translate(311.0,478) rotate(-90)" text-anchor="end">c10m1_caves</text>
<text transform="translate(323.0,478) rotate(-90)" text-anchor="end">c10m2_drainage</text>
<text transform="translate(335.0,478) rotate(-90)" text-anchor="end">c10m3_ranchhouse</text>
<text transform="translate(353.0,478) rotate(-90)" text-anchor="end">c10m4_mainstreet</text>
<text transform="translate(371.0,478) rotate(-90)" text-anchor="end">c10m5_houseboat</text>
<text transform="translate(380.0,478) rotate(-90)" text-anchor="end">c7m1_docks</text>
<text transform="translate(388.7,478) rotate(-90)" text-anchor="end">c7m2_barge</text>
<text transform="translate(416.0,478) rotate(-90)" text-anchor="end">c7m3_port</text>
<text transform="translate(424.7,478) rotate(-90)" text-anchor="end">c12m1_hilltop</text>
<text transform="translate(436.3,478) rotate(-90)" text-anchor="end">c12m2_traintunnel</text>
<text transform="translate(446.0,478) rotate(-90)" text-anchor="end">c12m3_bridge</text>
<text transform="translate(458.0,478) rotate(-90)" text-anchor="end">c12m4_barn</text>
<text transform="translate(472.3,478) rotate(-90)" text-anchor="end">c12m5_cornfield</text>
<text transform="translate(484.8,478) rotate(-90)" text-anchor="end">c2m1_highway</text>
<text transform="translate(499.7,478) rotate(-90)" text-anchor="end">c2m2_fairgrounds</text>
<text transform="translate(515.2,478) rotate(-90)" text-anchor="end">c2m3_coaster</text>
<text transform="translate(527.0,478) rotate(-90)" text-anchor="end">c2m4_barns</text>
<text transform="translate(542.0,478) rotate(-90)" text-anchor="end">c2m5_concert</text>
<text transform="translate(554.0,478) rotate(-90)" text-anchor="end">c1m1_hotel</text>
<text transform="translate(569.0,478) rotate(-90)" text-anchor="end">c1m2_streets</text>
<text transform="translate(580.8,478) rotate(-90)" text-anchor="end">c1m3_mall</text>
<text transform="translate(595.7,478) rotate(-90)" text-anchor="end">c1m4_atrium</text>
<text transform="translate(601.6,478) rotate(-90)" text-anchor="end">c5m1_waterfront</text>
<text transform="translate(625.6,478) rotate(-90)" text-anchor="end">c5m2_park</text>
<text transform="translate(643.5,478) rotate(-90)" text-anchor="end">c5m3_cemetery</text>
<text transform="translate(661.4,478) rotate(-90)" text-anchor="end">c5m4_quarter</text>
<text transform="translate(674.0,478) rotate(-90)" text-anchor="end">c5m5_bridge</text>
<text transform="translate(682.9,478) rotate(-90)" text-anchor="end">c11m1_greenhouse</text>
<text transform="translate(694.8,478) rotate(-90)" text-anchor="end">c11m2_offices</text>
<text transform="translate(728.2,478) rotate(-90)" text-anchor="end">c11m3_garage</text>
<text transform="translate(740.0,478) rotate(-90)" text-anchor="end">c11m4_terminal</text>
<text transform="translate(758.0,478) rotate(-90)" text-anchor="end">c11m5_runway</text>
<text transform="translate(769.0,478) rotate(-90)" text-anchor="end">c8m1_apartment</text>
<text transform="translate(784.5,478) rotate(-90)" text-anchor="end">c8m2_subway</text>
<text transform="translate(800.0,478) rotate(-90)" text-anchor="end">c8m3_sewers</text>
<text transform="translate(814.9,478) rotate(-90)" text-anchor="end">c8m4_interior</text>
<text transform="translate(832.7,478) rotate(-90)" text-anchor="end">c8m5_rooftop</text>
<text transform="translate(841.7,478) rotate(-90)" text-anchor="end">c10m1_caves</text>
<text transform="translate(857.2,478) rotate(-90)" text-anchor="end">c10m2_drainage</text>
<text transform="translate(871.5,478) rotate(-90)" text-anchor="end">c10m3_ranchhouse</text>
<text transform="translate(889.4,478) rotate(-90)" text-anchor="end">c10m4_mainstreet</text>
<text transform="translate(910.8,478) rotate(-90)" text-anchor="end">c10m5_houseboat</text>
<text transform="translate(926.0,478) rotate(-90)" text-anchor="end">c7m1_docks</text>
<text transform="translate(944.0,478) rotate(-90)" text-anchor="end">c7m2_barge</text>
<text transform="translate(965.0,478) rotate(-90)" text-anchor="end">c7m3_port</text>
<text transform="translate(995.0,478) rotate(-90)" text-anchor="end">c2m1_highway</text>
<text transform="translate(1019.0,478) rotate(-90)" text-anchor="end">c2m2_fairgrounds</text>
<text transform="translate(1037.0,478) rotate(-90)" text-anchor="end">c2m3_coaster</text>
<text transform="translate(1066.0,478) rotate(-90)" text-anchor="end">c2m4_barns</text>
<text transform="translate(1077.0,478) rotate(-90)" text-anchor="end">c2m5_concert</text>
</g>
<text transform="translate(265,478) rotate(-90)" text-anchor="end" font-family="Liberation Mono,monospace" font-size="8.2" fill="#6a6a6a" clip-path="none">c13m1_alpinecreek</text>
<line x1="287.5" y1="511.0" x2="287.5" y2="646.0" stroke="#cc1a1a" stroke-width="1" stroke-dasharray="4,3"/>
<line x1="323.5" y1="501.0" x2="323.5" y2="646.0" stroke="#cc1a1a" stroke-width="1" stroke-dasharray="4,3"/>
<line x1="359.5" y1="510.0" x2="359.5" y2="566.0" stroke="#cc1a1a" stroke-width="1" stroke-dasharray="4,3"/>
<line x1="359.5" y1="566.0" x2="359.5" y2="646" stroke="#cc1a1a" stroke-width="1"/>
<line x1="395.5" y1="509.5" x2="395.5" y2="561.0" stroke="#cc1a1a" stroke-width="1" stroke-dasharray="4,3"/>
<line x1="395.5" y1="561.0" x2="395.5" y2="646" stroke="#cc1a1a" stroke-width="1"/>
<line x1="431.5" y1="555.0" x2="431.5" y2="555.0" stroke="#cc1a1a" stroke-width="1" stroke-dasharray="4,3"/>
<line x1="431.5" y1="555.0" x2="431.5" y2="646" stroke="#cc1a1a" stroke-width="1"/>
<line x1="467.5" y1="508.0" x2="467.5" y2="646.0" stroke="#cc1a1a" stroke-width="1" stroke-dasharray="4,3"/>
<line x1="503.5" y1="504.0" x2="503.5" y2="646.0" stroke="#cc1a1a" stroke-width="1" stroke-dasharray="4,3"/>
<line x1="539.5" y1="521.0" x2="539.5" y2="539.0" stroke="#cc1a1a" stroke-width="1" stroke-dasharray="4,3"/>
<line x1="539.5" y1="539.0" x2="539.5" y2="646" stroke="#cc1a1a" stroke-width="1"/>
<line x1="575.5" y1="510.0" x2="575.5" y2="646.0" stroke="#cc1a1a" stroke-width="1" stroke-dasharray="4,3"/>
<line x1="611.5" y1="511.0" x2="611.5" y2="646.0" stroke="#cc1a1a" stroke-width="1" stroke-dasharray="4,3"/>
<line x1="647.5" y1="510.0" x2="647.5" y2="646.0" stroke="#cc1a1a" stroke-width="1" stroke-dasharray="4,3"/>
<line x1="683.5" y1="516.0" x2="683.5" y2="543.0" stroke="#cc1a1a" stroke-width="1" stroke-dasharray="4,3"/>
<line x1="683.5" y1="543.0" x2="683.5" y2="646" stroke="#cc1a1a" stroke-width="1"/>
<line x1="719.5" y1="616.0" x2="719.5" y2="646.0" stroke="#cc1a1a" stroke-width="1" stroke-dasharray="4,3"/>
<line x1="755.5" y1="592.0" x2="755.5" y2="646.0" stroke="#cc1a1a" stroke-width="1" stroke-dasharray="4,3"/>
<line x1="791.5" y1="506.6" x2="791.5" y2="646.0" stroke="#cc1a1a" stroke-width="1" stroke-dasharray="4,3"/>
<line x1="827.5" y1="506.6" x2="827.5" y2="646.0" stroke="#cc1a1a" stroke-width="1" stroke-dasharray="4,3"/>
<line x1="863.5" y1="510.0" x2="863.5" y2="621.0" stroke="#cc1a1a" stroke-width="1" stroke-dasharray="4,3"/>
<line x1="863.5" y1="621.0" x2="863.5" y2="646" stroke="#cc1a1a" stroke-width="1"/>
<line x1="899.5" y1="504.0" x2="899.5" y2="615.0" stroke="#cc1a1a" stroke-width="1" stroke-dasharray="4,3"/>
<line x1="899.5" y1="615.0" x2="899.5" y2="646" stroke="#cc1a1a" stroke-width="1"/>
<line x1="935.5" y1="527.0" x2="935.5" y2="611.0" stroke="#cc1a1a" stroke-width="1" stroke-dasharray="4,3"/>
<line x1="935.5" y1="611.0" x2="935.5" y2="646" stroke="#cc1a1a" stroke-width="1"/>
<line x1="971.5" y1="504.0" x2="971.5" y2="605.0" stroke="#cc1a1a" stroke-width="1" stroke-dasharray="4,3"/>
<line x1="971.5" y1="605.0" x2="971.5" y2="646" stroke="#cc1a1a" stroke-width="1"/>
<line x1="1007.5" y1="502.0" x2="1007.5" y2="646.0" stroke="#cc1a1a" stroke-width="1" stroke-dasharray="4,3"/>
<line x1="1043.5" y1="501.0" x2="1043.5" y2="595.0" stroke="#cc1a1a" stroke-width="1" stroke-dasharray="4,3"/>
<line x1="1043.5" y1="595.0" x2="1043.5" y2="646" stroke="#cc1a1a" stroke-width="1"/>
<g clip-path="url(#pc)" fill="none" stroke-linejoin="round">
<polyline points="269.0,581.0 698.0,514.0 713.0,644.0 1015.0,598.0 1018.0,607.8 1030.0,604.0 1033.0,596.6 1063.0,590.5 1067.0,601.0 1073.0,602.0 1080.0,616.0" stroke="#f0a428" stroke-width="1.2"/>
<polyline points="269.5,637.5 273.6,638.5 277.8,636.9 281.9,638.5 286.0,638.0 292.0,640.5 296.0,640.4 300.0,639.1 304.0,638.7 308.5,640.5 313.0,639.9 317.5,641.7 322.0,642.6 326.0,640.8 330.0,641.5 334.0,639.6 338.2,639.7 342.4,639.5 346.6,638.3 350.8,639.8 355.0,638.7 359.0,639.4 363.0,639.3 367.0,639.2 371.0,640.6 375.0,639.3 379.0,640.5 383.2,639.7 387.4,640.2 391.6,640.5 395.8,638.9 400.0,639.6 404.5,638.9 409.1,638.2 413.6,639.2 418.2,637.4 422.7,637.5 427.2,638.3 431.6,636.7 436.1,637.7 440.5,638.0 445.0,637.5 449.0,639.3 453.0,638.9 457.0,640.5 461.5,641.2 466.0,639.9 470.5,641.4 475.0,641.0 479.5,640.8 484.0,643.0 488.5,642.7 493.0,643.5 497.2,643.6 501.4,641.1 505.6,641.6 509.8,640.5 514.0,639.6 519.0,640.4 524.0,639.9 529.0,639.6 533.5,639.5 538.0,638.9 542.5,637.2 547.0,637.5 551.5,638.4 556.0,638.6 560.5,641.0 565.0,641.0 569.0,641.0 573.0,641.4 577.0,641.0 581.2,641.0 585.4,638.5 589.6,638.6 593.8,637.8 598.0,636.6 603.0,638.2 608.0,639.1 613.0,639.6 617.2,640.5 621.4,640.5 625.6,640.3 629.8,642.2 634.0,641.7 639.0,640.6 644.0,640.8 649.0,639.0 653.5,638.9 658.0,640.9 662.5,640.0 667.0,641.0 671.0,641.3 675.0,640.5 679.0,640.6 683.0,638.1 687.0,638.0 691.5,639.5 696.0,639.6 700.5,641.7 704.6,640.0 708.8,639.0 712.9,638.5 717.0,636.6 721.0,637.5 725.0,635.9 729.0,637.0 733.0,636.6 737.0,636.2 741.0,637.3 745.0,635.7 749.0,637.5 753.0,635.9 757.0,637.0 761.0,636.6 765.0,636.6 770.0,638.8 775.0,639.3 780.0,640.5 785.0,640.0 790.0,639.6 795.0,638.0 800.0,638.3 805.0,640.5 810.0,640.5 814.2,639.5 818.4,640.7 822.6,638.6 826.8,639.4 831.0,638.7 835.0,638.3 839.0,639.8 843.0,638.3 847.0,640.1 851.0,638.9 855.0,639.6 859.3,639.6 863.6,637.9 867.9,639.1 872.1,637.5 876.4,637.2 880.7,637.8 885.0,636.6 889.5,637.6 894.0,638.0 898.5,637.3 903.0,638.7 907.5,638.3 912.0,637.4 916.5,638.7 921.0,637.5 925.0,637.7 929.0,638.3 933.0,637.4 937.0,639.2 941.0,637.6 945.0,638.7 949.3,638.8 953.6,638.7 957.9,640.3 962.1,638.9 966.4,640.4 970.7,640.5 975.0,640.5 980.0,640.1 985.0,639.0 990.0,637.5 994.2,638.4 998.4,638.4 1002.6,638.2 1006.8,640.1 1011.0,639.6 1015.0,640.0 1019.0,639.1 1023.0,639.0 1027.0,639.6 1031.0,638.0 1035.0,638.7 1039.3,638.2 1043.6,639.1 1047.9,639.6 1052.1,638.3 1056.4,640.2 1060.7,639.1 1065.0,639.6 1070.0,641.2 1075.0,640.9 1080.0,641.7" stroke="#d42020" stroke-width="1.1"/>
<polyline points="269.0,503.0 275.0,510.0 280.0,507.0 285.0,510.0 288.0,511.0 292.0,504.0 300.0,503.0 305.0,500.0 315.0,501.0 322.0,501.0 330.0,507.0 340.0,506.0 346.0,503.0 352.0,506.0 357.0,506.0 362.0,510.0 365.0,510.0 372.0,508.0 377.0,505.0 380.0,507.0 388.0,506.0 395.0,509.5 400.0,506.0 405.0,507.0 410.0,519.0 415.0,545.0 419.0,575.0 422.0,588.0 426.0,583.0 431.5,555.0 435.0,530.0 439.4,516.0 445.5,509.0 451.6,506.0 457.7,512.7 460.0,513.0 467.5,507.8 473.0,510.0 482.4,516.0 486.6,510.7 493.0,510.0 496.1,504.8 500.9,506.6 506.3,501.2 514.6,511.3 525.3,510.7 530.4,507.2 537.3,519.7 544.4,542.3 551.6,551.3 557.5,543.5 564.0,520.9 568.9,517.3 572.4,510.7 580.0,510.0 584.4,509.6 590.9,519.7 598.0,523.0 603.0,523.0 606.0,513.1 611.0,511.0 622.6,521.5 629.2,520.3 635.2,506.6 645.3,507.8 647.7,510.7 653.6,507.2 662.0,504.2 670.3,514.9 678.7,535.8 683.5,543.5 690.6,530.4 699.0,523.9 704.3,533.4 708.0,555.0 713.0,590.0 719.1,617.6 723.5,613.9 727.2,616.3 737.0,623.2 745.5,609.0 752.8,596.8 755.2,592.0 763.6,559.0 767.2,538.8 774.3,517.3 779.7,506.6 783.8,507.2 798.1,507.2 805.3,503.6 817.2,504.2 823.8,510.1 829.7,506.6 836.3,510.1 839.9,510.1 845.8,517.3 850.6,516.7 856.5,516.7 867.3,506.6 874.4,504.2 891.1,503.6 896.5,507.2 900.7,503.6 911.4,501.2 919.8,535.2 927.0,551.7 936.7,522.4 944.0,504.1 956.2,506.6 964.8,506.6 975.7,502.9 1006.2,504.1 1011.1,510.2 1022.0,513.9 1034.3,513.4 1040.4,501.7 1048.9,501.7 1061.1,504.1 1070.9,500.5 1079.4,501.2" stroke="#1c1cc8" stroke-width="1.1"/>
</g>
<g font-family="Liberation Mono,monospace" font-size="8.5" font-weight="bold" fill="#fff">
<text x="266" y="478.5" text-anchor="end">24</text>
<text x="266" y="499.6" text-anchor="end">21</text>
<text x="266" y="520.8" text-anchor="end">18</text>
<text x="266" y="541.9" text-anchor="end">15</text>
<text x="266" y="563.1" text-anchor="end">12</text>
<text x="266" y="584.2" text-anchor="end">9</text>
<text x="266" y="605.4" text-anchor="end">6</text>
<text x="266" y="626.5" text-anchor="end">3</text>
<text x="1081" y="498.5">21</text>
<text x="1081" y="503.5">20.0</text>
<text x="1081" y="562.5">12</text>
<text x="1081" y="619.5">401</text>
<text x="1081" y="643.5">50</text>
<text x="289.0" y="654.5" text-anchor="middle" font-size="8">21:04</text>
<text x="325.0" y="654.5" text-anchor="middle" font-size="8">22:04</text>
<text x="361.0" y="654.5" text-anchor="middle" font-size="8">23:04</text>
<text x="397.0" y="654.5" text-anchor="middle" font-size="8">00:04</text>
<text x="433.0" y="654.5" text-anchor="middle" font-size="8">01:04</text>
<text x="469.0" y="654.5" text-anchor="middle" font-size="8">02:07</text>
<text x="505.0" y="654.5" text-anchor="middle" font-size="8">03:07</text>
<text x="541.0" y="654.5" text-anchor="middle" font-size="8">04:07</text>
<text x="577.0" y="654.5" text-anchor="middle" font-size="8">05:07</text>
<text x="613.0" y="654.5" text-anchor="middle" font-size="8">06:07</text>
<text x="649.0" y="654.5" text-anchor="middle" font-size="8">07:07</text>
<text x="685.0" y="654.5" text-anchor="middle" font-size="8">08:07</text>
<text x="721.0" y="654.5" text-anchor="middle" font-size="8">09:07</text>
<text x="757.0" y="654.5" text-anchor="middle" font-size="8">10:07</text>
<text x="793.0" y="654.5" text-anchor="middle" font-size="8">11:07</text>
<text x="829.0" y="654.5" text-anchor="middle" font-size="8">12:07</text>
<text x="865.0" y="654.5" text-anchor="middle" font-size="8">13:07</text>
<text x="901.0" y="654.5" text-anchor="middle" font-size="8">14:07</text>
<text x="937.0" y="654.5" text-anchor="middle" font-size="8">15:07</text>
<text x="973.0" y="654.5" text-anchor="middle" font-size="8">16:07</text>
<text x="1009.0" y="654.5" text-anchor="middle" font-size="8">17:07</text>
<text x="1045.0" y="654.5" text-anchor="middle" font-size="8">18:07</text>
</g>
<g font-family="Liberation Mono,monospace" font-size="8.3" fill="#ffffff" stroke="#ffffff" stroke-width="0.25">
<rect x="279.5" y="466.5" width="3" height="3" fill="#8c8c8c" stroke="none"/>
<text x="285.5" y="471.5">max_players</text>
<rect x="349.0" y="466.5" width="3" height="3" fill="#a0a0a0" stroke="none"/>
<text x="355.0" y="471.5">min_players</text>
<rect x="418.0" y="466.5" width="3" height="3" fill="#2020d0" stroke="none"/>
<text x="424.0" y="471.5">act_players</text>
<rect x="487.0" y="466.5" width="3" height="3" fill="#f0a428" stroke="none"/>
<text x="493.0" y="471.5">uptime</text>
<rect x="532.0" y="466.5" width="3" height="3" fill="#e02020" stroke="none"/>
<text x="538.0" y="471.5">fps</text>
<text x="856.5" y="470.5">Average Players Last 24h: 17.8 Last 1h: 20.1</text>
</g>
</svg>
<div class="a" style="left:165px;top:692px;width:1018px;height:19px;background:linear-gradient(#4d4b4d,#2e2e2e);"></div>
<div class="a" style="left:165px;top:711px;width:1018px;height:1px;background:#a6a6a6;"></div>
<div class="a t" style="top:696.53px;font-size:10px;line-height:10px;font-weight:bold;color:#f4f4f4;font-family:'Liberation Sans',sans-serif;letter-spacing:0.1px;left:172.00px;">Неделя</div>
<div class="a" style="left:165px;top:712px;width:1018px;height:40px;background:#282828;"></div>
<div class="a" style="left:239px;top:712px;width:871px;height:40px;background:#262626;"></div>
<div class="a" style="left:269px;top:731px;width:811px;height:10px;background:#f4f4f4;"></div>
<svg class="a" style="left:0;top:0" width="1366" height="738"><g font-family="Liberation Mono,monospace" font-size="8.3" fill="#ffffff" stroke="#ffffff" stroke-width="0.25"><rect x="279.5" y="722.5" width="3" height="3" fill="#8c8c8c" stroke="none"/><text x="285.5" y="727">max_players</text><rect x="349.0" y="722.5" width="3" height="3" fill="#a0a0a0" stroke="none"/><text x="355" y="727">min_players</text><rect x="418.0" y="722.5" width="3" height="3" fill="#2020d0" stroke="none"/><text x="424" y="727">act_players</text><rect x="487.0" y="722.5" width="3" height="3" fill="#f0a428" stroke="none"/><text x="493" y="727">uptime</text><rect x="532.0" y="722.5" width="3" height="3" fill="#e02020" stroke="none"/><text x="538" y="727">fps</text><text x="266" y="735" text-anchor="end" font-size="8.5">24</text></g></svg>
<div class="a" style="left:0;top:0;width:1366px;height:25px;background:linear-gradient(90deg,#a9c6dc 0,#8ab0cf 25px,#6094b8 70px,#5288b0 200px,#4a80a8 400px,#3f789d 580px,#437a9f 700px,#3f779c 760px,#2d6588 795px,#4a80a6 825px,#4880a6 843px,#2c6488 865px,#467ea4 890px,#4a82a8 977px,#2f6a8f 992px,#3a749a 1010px,#3f799f 1090px,#5086ad 1120px,#3d769c 1152px,#5589b0 1180px,#5f92b8 1230px,#7aa6c8 1366px)"></div>
<div class="a" style="left:600px;top:19px;width:766px;height:6px;background:linear-gradient(rgba(160,196,224,0),rgba(160,196,224,.45));"></div>
<svg class="a" style="left:0;top:0" width="640" height="26"><defs><linearGradient id="itab" x1="0" y1="0" x2="0" y2="1"><stop offset="0" stop-color="#d3dee8"/><stop offset="1" stop-color="#c0cfdc"/></linearGradient><linearGradient id="itab3" x1="0" y1="0" x2="0" y2="1"><stop offset="0" stop-color="#c4d2de"/><stop offset="1" stop-color="#b8c8d6"/></linearGradient></defs><path d="M5.5 25 L14 3 Q15 1 18 1 L196 1 Q199 1 200 3 L209 25 Z" fill="url(#itab)" stroke="#8ea3b5" stroke-width="1"/><path d="M395 25 L386 3 Q385 1 382 1 L582 1 Q585 1 586 3 L594 25 Z" fill="url(#itab3)" stroke="#6f8ca4" stroke-width="1"/><path d="M599 20 L593.5 7.5 Q593 6 595 6 L616 6 Q618 6 619 8 L623.5 19 Q624 20 622 20 Z" fill="#bccbd8" stroke="#5d7f99" stroke-width="1"/><path d="M200.5 25.5 L209 3 Q210 1 213 1 L390 1 Q393 1 394 3 L402.5 25.5 Z" fill="#fbfbfb" stroke="#8a98a4" stroke-width="1"/></svg>
<div class="a" style="left:0px;top:24px;width:1366px;height:1px;background:#8e9aa6;"></div>
<div class="a" style="left:201px;top:23px;width:201px;height:3px;background:#fbfbfb;"></div>
<div class="a" style="left:19px;top:5px;width:16px;height:16px;background:#b2dcb0;border:1px solid #2f4f35"></div>
<div class="a t" style="top:6.15px;font-size:14px;line-height:14px;font-weight:normal;color:#1e5a28;font-family:'Liberation Serif',serif;left:-172.50px;width:400px;text-align:center;font-style:italic;">Z</div>
<div class="a t" style="top:7.27px;font-size:11.5px;line-height:11.5px;font-weight:normal;color:#4a4f5e;font-family:'Liberation Sans',sans-serif;left:39.50px;width:140px;overflow:hidden;-webkit-mask-image:linear-gradient(90deg,#000 118px,transparent 140px);">Ответить в теме Баги и на</div>
<svg class="a" style="left:185px;top:8px" width="10" height="10"><path d="M1 1 L9 9 M9 1 L1 9" stroke="#707880" stroke-width="1.5"/></svg>
<svg class="a" style="left:212px;top:5px" width="16" height="15"><defs><linearGradient id="fvg" x1="0" y1="0" x2="0" y2="1"><stop offset="0" stop-color="#b4c8e4"/><stop offset=".35" stop-color="#5e94d4"/><stop offset=".7" stop-color="#1a66c0"/><stop offset="1" stop-color="#0a52a8"/></linearGradient></defs><path d="M2 0 L14 0 L16 2 L16 13 L14 15 L2 15 L0 13 L0 2 Z" fill="url(#fvg)"/><polyline points="1,8.5 3,6.5 5,9 7,8 9,10 11,6.5 13,8.5 15,6" fill="none" stroke="#a8d4ff" stroke-width=".9" opacity=".8"/></svg>
<div class="a t" style="top:7.27px;font-size:11.5px;line-height:11.5px;font-weight:normal;color:#222;font-family:'Liberation Sans',sans-serif;left:232.50px;width:140px;overflow:hidden;-webkit-mask-image:linear-gradient(90deg,#000 128px,transparent 140px);">HLstatsX | ZO-ZO.ORG - L4D</div>
<svg class="a" style="left:378px;top:8px" width="10" height="10"><path d="M1 1 L9 9 M9 1 L1 9" stroke="#555" stroke-width="1.6"/></svg>
<div class="a t" style="top:7.27px;font-size:11.5px;line-height:11.5px;font-weight:normal;color:#4a4f5a;font-family:'Liberation Sans',sans-serif;left:405.00px;">Новая вкладка</div>
<svg class="a" style="left:571px;top:8px" width="10" height="10"><path d="M1 1 L9 9 M9 1 L1 9" stroke="#707880" stroke-width="1.5"/></svg>
<svg class="a" style="left:1226px;top:-2px" width="140" height="22"><defs><linearGradient id="wb" x1="0" y1="0" x2="0" y2="1"><stop offset="0" stop-color="#dae6ef"/><stop offset=".45" stop-color="#b9cbd9"/><stop offset=".5" stop-color="#6a8eaa"/><stop offset="1" stop-color="#86a6be"/></linearGradient><linearGradient id="wc" x1="0" y1="0" x2="0" y2="1"><stop offset="0" stop-color="#eeb4a6"/><stop offset=".45" stop-color="#dc8672"/><stop offset=".5" stop-color="#bf3218"/><stop offset="1" stop-color="#cf5a40"/></linearGradient></defs><rect x="2.5" y="0.5" width="24" height="19" rx="3" fill="url(#wb)" stroke="#2e4a60" stroke-width="1"/><rect x="34.5" y="0.5" width="102" height="19" rx="3" fill="url(#wb)" stroke="#2e4a60" stroke-width="1"/><path d="M89.5 1 L89.5 19 L133 19 Q136 19 136 16 L136 1 Z" fill="url(#wc)"/><rect x="34.5" y="0.5" width="102" height="19" rx="3" fill="none" stroke="#2e4a60" stroke-width="1"/><path d="M62.5 1 L62.5 19 M89.5 1 L89.5 19" stroke="#53708a" stroke-width="1"/><circle cx="14.5" cy="7" r="2.5" fill="#fff"/><path d="M9.5 14 Q10 10 14.5 10 Q19 10 19.5 14 Z" fill="#fff" stroke="#33485a" stroke-width=".5"/><rect x="43" y="10" width="10" height="3.5" fill="#fff" stroke="#33485a" stroke-width=".6"/><rect x="69" y="6" width="8" height="8" fill="none" stroke="#fff" stroke-width="2"/><rect x="71.5" y="3.5" width="8" height="8" fill="none" stroke="#fff" stroke-width="1.6"/><path d="M108 5 L117 14 M117 5 L108 14" stroke="#fff" stroke-width="3"/></svg>
<div class="a" style="left:0px;top:25px;width:1366px;height:36px;background:linear-gradient(#fdfdfd,#f4f4f4 40%,#ededed);"></div>
<div class="a" style="left:0px;top:60px;width:1366px;height:1px;background:#a6a6a6;"></div>
<svg class="a" style="left:8px;top:33px" width="80" height="20"><path d="M3.5 9.5 L16 9.5 M9 3.5 L3 9.5 L9 15.5" stroke="#5c5c5c" stroke-width="2.8" fill="none" stroke-linecap="round" stroke-linejoin="round"/><path d="M32 9.5 L44.5 9.5 M38.5 3.5 L44.5 9.5 L38.5 15.5" stroke="#c6c6c6" stroke-width="2.8" fill="none" stroke-linecap="round" stroke-linejoin="round"/><path d="M72.5 6.5 A6 6 0 1 0 73.5 12" stroke="#5a5a5a" stroke-width="2.8" fill="none"/><path d="M75.5 2.5 L75.5 9.5 L68.5 9.5 Z" fill="#5a5a5a"/></svg>
<div class="a" style="left:94px;top:29px;width:1205px;height:27px;background:#fff;border:1px solid #b9b9b9;border-top-color:#a8a8a8;border-radius:2px"></div>
<svg class="a" style="left:101px;top:34px" width="14" height="17"><path d="M1.5 1.5 L8.5 1.5 L12.5 5.5 L12.5 15.5 L1.5 15.5 Z" fill="#f4f4f4" stroke="#8c8c8c" stroke-width="1"/><path d="M8.5 1.5 L8.5 5.5 L12.5 5.5" fill="#ddd" stroke="#8c8c8c" stroke-width="1"/></svg>
<div class="a t" style="left:120px;top:33.5px;font-size:16px;line-height:18px;color:#222">zo-zo.org<span style="color:#8a8a8a">/hlstatsx/hlstats.php?game=l4d2</span></div>
<svg class="a" style="left:1276px;top:33px" width="19" height="19"><path d="M9.50 1.40 L12.15 6.66 L17.96 7.55 L13.78 11.69 L14.73 17.50 L9.50 14.80 L4.27 17.50 L5.22 11.69 L1.04 7.55 L6.85 6.66 Z" fill="none" stroke="#5e5e5e" stroke-width="1.35" stroke-linejoin="round"/></svg>
<svg class="a" style="left:1308px;top:31px" width="20" height="22"><g fill="none" stroke="#8e8e8e" stroke-width=".85" stroke-linejoin="round"><path d="M9.5 10 C6.5 7.5 5.5 5.5 6.3 4 C7.2 2.6 8.8 2.9 9.5 4.3 C10.2 2.9 11.8 2.6 12.7 4 C13.5 5.5 12.5 7.5 9.5 10 Z"/><path d="M5 14 C2.5 12 1.6 10.3 2.2 9 C3 7.8 4.4 8 5 9.2 C5.6 8 7 7.8 7.8 9 C8.4 10.3 7.5 12 5 14 Z"/><path d="M14.5 12.5 C12 10.5 11.1 8.8 11.7 7.5 C12.5 6.3 13.9 6.5 14.5 7.7 C15.1 6.5 16.5 6.3 17.3 7.5 C17.9 8.8 17 10.5 14.5 12.5 Z"/><path d="M9.5 10 L9 20 M5 14 L8.5 20 M14.5 12.5 L9.5 20"/></g></svg>
<svg class="a" style="left:1342px;top:35px" width="16" height="15"><path d="M2.5 2.5 L12.5 2.5 M2.5 7.4 L12.5 7.4 M2.5 12.4 L12.5 12.4" stroke="#555" stroke-width="2.6" stroke-linecap="round"/></svg>
<div class="a" style="left:1349px;top:61px;width:17px;height:677px;background:#f0f0f0;border-left:1px solid #e4e4e4"></div>
<svg class="a" style="left:1352px;top:66px" width="11" height="8"><path d="M1.5 6.5 L5.5 2 L9.5 6.5 Z" fill="#505050"/></svg>
<div class="a" style="left:1351px;top:125px;width:13px;height:107px;background:#bdbdbd;"></div>
<svg class="a" style="left:1352px;top:726px" width="11" height="8"><path d="M1.5 1.5 L5.5 6 L9.5 1.5 Z" fill="#505050"/></svg>
<div class="a" style="left:15px;top:733px;width:26px;height:26px;border-radius:50%;border:1.5px solid #2f5050;background:linear-gradient(#d8e4ea,#a8bcc8)"></div>
</body></html>
